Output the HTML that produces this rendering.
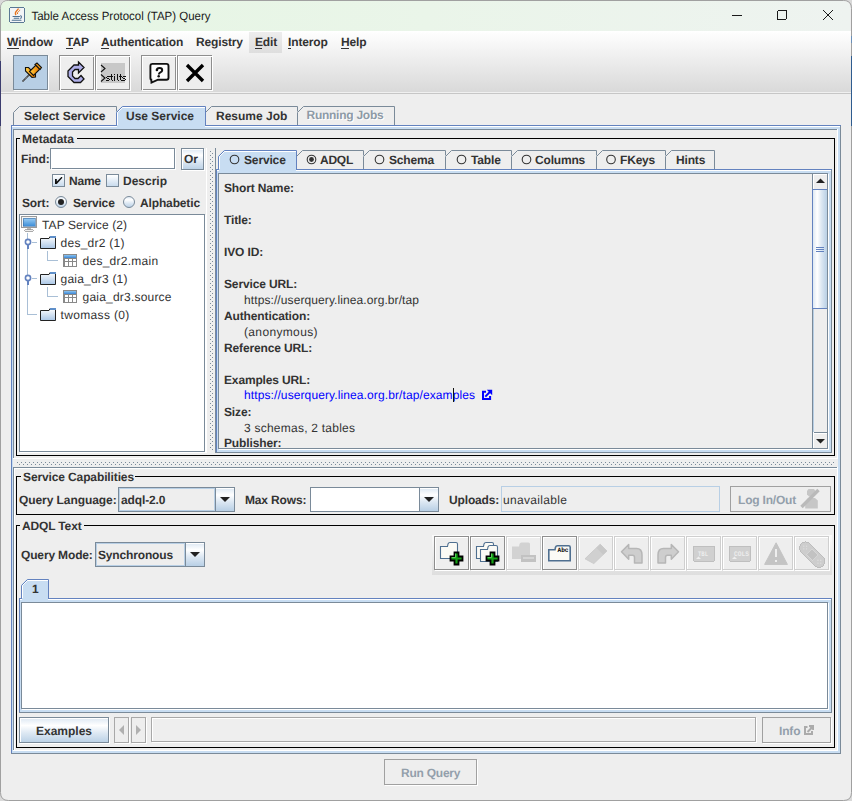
<!DOCTYPE html>
<html><head><meta charset="utf-8"><title>Table Access Protocol (TAP) Query</title>
<style>html,body{margin:0;padding:0;width:852px;height:801px;overflow:hidden;background:#d9d9d9;font-family:"Liberation Sans",sans-serif;}svg{display:block} svg text{shape-rendering:auto} circle,path{shape-rendering:geometricPrecision}</style></head>
<body><svg width="852" height="801" viewBox="0 0 852 801" shape-rendering="crispEdges" text-rendering="geometricPrecision"><defs><linearGradient id="g1" x1="0" y1="0" x2="1" y2="0"><stop offset="0" stop-color="#e5f6e3"/><stop offset="0.5" stop-color="#eaf5e9"/><stop offset="1" stop-color="#eef3f0"/></linearGradient><linearGradient id="g2" x1="0" y1="0" x2="0" y2="1"><stop offset="0" stop-color="#FFFFFF"/><stop offset="1" stop-color="#D9D9D9"/></linearGradient><linearGradient id="g3" x1="0" y1="0" x2="0" y2="1"><stop offset="0" stop-color="#EDEDED"/><stop offset="1" stop-color="#DEDEDE"/></linearGradient><linearGradient id="g4" x1="0" y1="0" x2="1" y2="0"><stop offset="0" stop-color="#ffd34a"/><stop offset="0.5" stop-color="#f7a21b"/><stop offset="1" stop-color="#e07000"/></linearGradient><linearGradient id="g5" x1="0" y1="0" x2="0" y2="1"><stop offset="0" stop-color="#DDE8F3"/><stop offset="0.3" stop-color="#FFFFFF"/><stop offset="0.6" stop-color="#DDE8F3"/><stop offset="1" stop-color="#B8CFE5"/></linearGradient><linearGradient id="g6" x1="0" y1="0" x2="0" y2="1"><stop offset="0" stop-color="#FFFFFF"/><stop offset="1" stop-color="#C4D8EC"/></linearGradient><linearGradient id="g7" x1="0" y1="0" x2="0" y2="1"><stop offset="0" stop-color="#FFFFFF"/><stop offset="1" stop-color="#C4D8EC"/></linearGradient><linearGradient id="g8" x1="0" y1="0" x2="0" y2="1"><stop offset="0" stop-color="#DDE8F3"/><stop offset="0.3" stop-color="#FFFFFF"/><stop offset="0.6" stop-color="#DDE8F3"/><stop offset="1" stop-color="#B8CFE5"/></linearGradient><linearGradient id="g9" x1="0" y1="0" x2="0" y2="1"><stop offset="0" stop-color="#DDE8F3"/><stop offset="0.3" stop-color="#FFFFFF"/><stop offset="0.6" stop-color="#DDE8F3"/><stop offset="1" stop-color="#B8CFE5"/></linearGradient><linearGradient id="g10" x1="0" y1="0" x2="0" y2="1"><stop offset="0" stop-color="#9fd0f5"/><stop offset="1" stop-color="#3f8fd8"/></linearGradient><linearGradient id="g11" x1="0" y1="0" x2="0" y2="1"><stop offset="0" stop-color="#ffffff"/><stop offset="1" stop-color="#a9c6e6"/></linearGradient><linearGradient id="g12" x1="0" y1="0" x2="0" y2="1"><stop offset="0" stop-color="#8cc4f0"/><stop offset="1" stop-color="#3a86d6"/></linearGradient><linearGradient id="g13" x1="0" y1="0" x2="0" y2="1"><stop offset="0" stop-color="#ffffff"/><stop offset="1" stop-color="#a9c6e6"/></linearGradient><linearGradient id="g14" x1="0" y1="0" x2="0" y2="1"><stop offset="0" stop-color="#8cc4f0"/><stop offset="1" stop-color="#3a86d6"/></linearGradient><linearGradient id="g15" x1="0" y1="0" x2="0" y2="1"><stop offset="0" stop-color="#ffffff"/><stop offset="1" stop-color="#a9c6e6"/></linearGradient><linearGradient id="g16" x1="0" y1="0" x2="1" y2="0"><stop offset="0" stop-color="#DDE8F3"/><stop offset="0.3" stop-color="#FFFFFF"/><stop offset="0.6" stop-color="#DDE8F3"/><stop offset="1" stop-color="#B8CFE5"/></linearGradient><linearGradient id="g17" x1="0" y1="0" x2="0" y2="1"><stop offset="0" stop-color="#DDE8F3"/><stop offset="0.3" stop-color="#FFFFFF"/><stop offset="0.6" stop-color="#DDE8F3"/><stop offset="1" stop-color="#B8CFE5"/></linearGradient><linearGradient id="g18" x1="0" y1="0" x2="0" y2="1"><stop offset="0" stop-color="#DDE8F3"/><stop offset="0.3" stop-color="#FFFFFF"/><stop offset="0.6" stop-color="#DDE8F3"/><stop offset="1" stop-color="#B8CFE5"/></linearGradient><linearGradient id="g19" x1="0" y1="0" x2="0" y2="1"><stop offset="0" stop-color="#DDE8F3"/><stop offset="0.3" stop-color="#FFFFFF"/><stop offset="0.6" stop-color="#DDE8F3"/><stop offset="1" stop-color="#B8CFE5"/></linearGradient><linearGradient id="g20" x1="0" y1="0" x2="0" y2="1"><stop offset="0" stop-color="#FAFAFA"/><stop offset="1" stop-color="#DEDEDE"/></linearGradient><linearGradient id="g21" x1="0" y1="0" x2="0" y2="1"><stop offset="0" stop-color="#DDE8F3"/><stop offset="0.3" stop-color="#FFFFFF"/><stop offset="0.6" stop-color="#DDE8F3"/><stop offset="1" stop-color="#B8CFE5"/></linearGradient></defs><rect x="0" y="0" width="852" height="801" fill="#d9d9d9"/><path d="M0.5 8.5 Q0.5 0.5 8.5 0.5 H843.5 Q851.5 0.5 851.5 8.5 V792.5 Q851.5 800.5 843.5 800.5 H8.5 Q0.5 800.5 0.5 792.5 Z" fill="#EEEEEE" stroke="#A0A0A0" stroke-width="1"/><rect x="0" y="61" width="1" height="65" fill="#3b3c6e" /><rect x="851" y="56" width="1" height="70" fill="#2f5c8f" /><rect x="851" y="36" width="1" height="7" fill="#6a8fb8" /><path d="M1 8 Q1 1 8 1 L843 1 Q850 1 850 8 L850 31 L1 31 Z" fill="url(#g1)"/><rect x="9.5" y="7.5" width="15" height="15" rx="2" fill="#f3f4f6" stroke="#5a7894" stroke-width="1.2"/><path d="M16 15 Q14.5 13 16.5 11 Q18 9.5 18.5 8.5" stroke="#e8721a" stroke-width="1.3" fill="none"/><path d="M17.5 14 Q17 12.5 18.8 11.3 Q19.8 10.5 19.8 9.8" stroke="#e8721a" stroke-width="1" fill="none"/><path d="M13 16.5 H19.5 M14.2 18.3 H18.8 M12.2 20.2 H21" stroke="#4f7191" stroke-width="1.1" stroke-linecap="round"/><path d="M20.3 15.5 Q22.5 16.5 20.5 18.8" stroke="#4f7191" stroke-width="1.1" fill="none"/><text x="31.5" y="20" font-size="12" fill="#1a1a1a" textLength="179" lengthAdjust="spacingAndGlyphs" font-family="Liberation Sans" >Table Access Protocol (TAP) Query</text><rect x="732" y="15" width="10" height="1" fill="#1a1a1a" /><rect x="777.5" y="10.5" width="9" height="9" rx="1.5" fill="none" stroke="#1a1a1a" stroke-width="1"/><path d="M823 10 L833 20 M833 10 L823 20" stroke="#1a1a1a" stroke-width="1"/><rect x="1" y="31" width="850" height="61" fill="url(#g2)" /><rect x="1" y="92" width="850" height="1" fill="#F0F0F0" /><rect x="1" y="93" width="850" height="1" fill="#C6C6C6" /><rect x="249" y="32" width="33" height="21" fill="url(#g3)" /><text x="7" y="46" font-size="12" font-weight="bold" fill="#333333" textLength="45.86" lengthAdjust="spacing" font-family="Liberation Sans" >Window</text><text x="66" y="46" font-size="12" font-weight="bold" fill="#333333" font-family="Liberation Sans" >TAP</text><text x="101" y="46" font-size="12" font-weight="bold" fill="#333333" textLength="82.3" lengthAdjust="spacing" font-family="Liberation Sans" >Authentication</text><text x="196" y="46" font-size="12" font-weight="bold" fill="#333333" textLength="47.06" lengthAdjust="spacing" font-family="Liberation Sans" >Registry</text><text x="255" y="46" font-size="12" font-weight="bold" fill="#333333" textLength="22.2" lengthAdjust="spacing" font-family="Liberation Sans" >Edit</text><text x="288" y="46" font-size="12" font-weight="bold" fill="#333333" textLength="39.84" lengthAdjust="spacing" font-family="Liberation Sans" >Interop</text><text x="341" y="46" font-size="12" font-weight="bold" fill="#333333" textLength="25.48" lengthAdjust="spacing" font-family="Liberation Sans" >Help</text><rect x="7" y="48" width="12" height="1" fill="#333333" /><rect x="66" y="48" width="7" height="1" fill="#333333" /><rect x="101" y="48" width="8" height="1" fill="#333333" /><rect x="255" y="48" width="7" height="1" fill="#333333" /><rect x="288" y="48" width="3" height="1" fill="#333333" /><rect x="341" y="48" width="8" height="1" fill="#333333" /><rect x="14" y="56" width="34" height="34" fill="#B8CFE5" /><rect x="13" y="55" width="35" height="1" fill="#7A8A99" /><rect x="13" y="89" width="35" height="1" fill="#7A8A99" /><rect x="13" y="55" width="1" height="35" fill="#7A8A99" /><rect x="47" y="55" width="1" height="35" fill="#7A8A99" /><rect x="14" y="90" width="35" height="1" fill="#FFFFFF" /><rect x="48" y="56" width="1" height="35" fill="#FFFFFF" /><rect x="60" y="56" width="34" height="34" fill="#EEEEEE" /><rect x="59" y="55" width="35" height="1" fill="#8E8E8E" /><rect x="59" y="89" width="35" height="1" fill="#8E8E8E" /><rect x="59" y="55" width="1" height="35" fill="#8E8E8E" /><rect x="93" y="55" width="1" height="35" fill="#8E8E8E" /><rect x="60" y="56" width="35" height="1" fill="#FFFFFF" /><rect x="60" y="90" width="35" height="1" fill="#FFFFFF" /><rect x="60" y="56" width="1" height="35" fill="#FFFFFF" /><rect x="94" y="56" width="1" height="35" fill="#FFFFFF" /><rect x="59" y="55" width="1" height="35" fill="#8E8E8E" /><rect x="59" y="55" width="35" height="1" fill="#8E8E8E" /><rect x="96" y="56" width="34" height="34" fill="#EEEEEE" /><rect x="95" y="55" width="35" height="1" fill="#8E8E8E" /><rect x="95" y="89" width="35" height="1" fill="#8E8E8E" /><rect x="95" y="55" width="1" height="35" fill="#8E8E8E" /><rect x="129" y="55" width="1" height="35" fill="#8E8E8E" /><rect x="96" y="56" width="35" height="1" fill="#FFFFFF" /><rect x="96" y="90" width="35" height="1" fill="#FFFFFF" /><rect x="96" y="56" width="1" height="35" fill="#FFFFFF" /><rect x="130" y="56" width="1" height="35" fill="#FFFFFF" /><rect x="95" y="55" width="1" height="35" fill="#8E8E8E" /><rect x="95" y="55" width="35" height="1" fill="#8E8E8E" /><rect x="142" y="56" width="34" height="34" fill="#EEEEEE" /><rect x="141" y="55" width="35" height="1" fill="#8E8E8E" /><rect x="141" y="89" width="35" height="1" fill="#8E8E8E" /><rect x="141" y="55" width="1" height="35" fill="#8E8E8E" /><rect x="175" y="55" width="1" height="35" fill="#8E8E8E" /><rect x="142" y="56" width="35" height="1" fill="#FFFFFF" /><rect x="142" y="90" width="35" height="1" fill="#FFFFFF" /><rect x="142" y="56" width="1" height="35" fill="#FFFFFF" /><rect x="176" y="56" width="1" height="35" fill="#FFFFFF" /><rect x="141" y="55" width="1" height="35" fill="#8E8E8E" /><rect x="141" y="55" width="35" height="1" fill="#8E8E8E" /><rect x="178" y="56" width="34" height="34" fill="#EEEEEE" /><rect x="177" y="55" width="35" height="1" fill="#8E8E8E" /><rect x="177" y="89" width="35" height="1" fill="#8E8E8E" /><rect x="177" y="55" width="1" height="35" fill="#8E8E8E" /><rect x="211" y="55" width="1" height="35" fill="#8E8E8E" /><rect x="178" y="56" width="35" height="1" fill="#FFFFFF" /><rect x="178" y="90" width="35" height="1" fill="#FFFFFF" /><rect x="178" y="56" width="1" height="35" fill="#FFFFFF" /><rect x="212" y="56" width="1" height="35" fill="#FFFFFF" /><rect x="177" y="55" width="1" height="35" fill="#8E8E8E" /><rect x="177" y="55" width="35" height="1" fill="#8E8E8E" /><path d="M22.5 81.5 L29.5 74.5" stroke="#333" stroke-width="1.6"/><path d="M23.5 80.5 L28.5 75.5" stroke="#ddd" stroke-width="0.6" stroke-dasharray="1 1"/><path d="M25.5 67.5 L28.5 67.5 L35.5 74.5 L35.5 77 L32 77.5 L25.5 71 Z" fill="url(#g4)" stroke="#111" stroke-width="1.1"/><path d="M29.5 71.5 L36 65 L40 69 L33.5 75.5 Z" fill="url(#g4)" stroke="#111" stroke-width="1.1"/><path d="M35 64.5 L37 63 L41.5 67.5 L40 69.5 Z" fill="#f59a10" stroke="#111" stroke-width="1.1"/><path d="M78.5 62 L84 67.5 L78.5 73 V69.5 H75 L72.5 72 V76 L75 78.5 H78 L81 75.5 L84 79 L80.5 82.5 H74 L68 76.5 V71 L74 65 H78.5 Z" fill="#aeaee8" stroke="#111" stroke-width="1.3" stroke-linejoin="miter"/><rect x="101" y="63" width="24" height="20" fill="#C8C8C8" /><path d="M101 65 L105 68.5 L101 72 M101 74.5 L105 78 L101 81.5" stroke="#111" stroke-width="1.1" fill="none"/><rect x="107" y="76" width="3" height="1" fill="#111" /><rect x="106" y="77" width="1" height="1" fill="#111" /><rect x="107" y="78" width="2" height="1" fill="#111" /><rect x="109" y="79" width="1" height="1" fill="#111" /><rect x="106" y="80" width="3" height="1" fill="#111" /><rect x="111" y="74" width="1" height="6" fill="#111" /><rect x="110" y="76" width="3" height="1" fill="#111" /><rect x="112" y="80" width="1" height="1" fill="#111" /><rect x="114" y="74" width="1" height="1" fill="#111" /><rect x="114" y="76" width="1" height="5" fill="#111" /><rect x="117" y="74" width="1" height="6" fill="#111" /><rect x="118" y="80" width="1" height="1" fill="#111" /><rect x="120" y="74" width="1" height="6" fill="#111" /><rect x="119" y="76" width="3" height="1" fill="#111" /><rect x="121" y="80" width="1" height="1" fill="#111" /><rect x="123" y="76" width="3" height="1" fill="#111" /><rect x="122" y="77" width="1" height="1" fill="#111" /><rect x="123" y="78" width="2" height="1" fill="#111" /><rect x="125" y="79" width="1" height="1" fill="#111" /><rect x="122" y="80" width="3" height="1" fill="#111" /><path d="M152 63.9 H166.5 Q168.5 63.9 168.5 65.9 V77.7 Q168.5 79.7 166.5 79.7 H158 L151.5 82.5 L151.3 79.7 Q150.4 79.7 150.4 77.7 V65.9 Q150.4 63.9 152.4 63.9 Z" fill="#fff" stroke="#111" stroke-width="1.9"/><path d="M156.9 70.2 Q156.9 68 159.6 68 Q162.2 68 162.2 70.2 Q162.2 71.6 160.4 72.4 Q158.9 73.1 158.9 74.6" stroke="#111" stroke-width="2" fill="none"/><circle cx="156.9" cy="70" r="1.3" fill="#111"/><circle cx="158.7" cy="76.2" r="1.25" fill="#111"/><path d="M187 65 L203 81 M203 65 L187 81" stroke="#000" stroke-width="3.4"/><rect x="12" y="126" width="828" height="627" fill="#C8DDF2" /><rect x="11" y="125" width="1" height="629" fill="#6382BF" /><rect x="11" y="753" width="830" height="1" fill="#7A8A99" /><rect x="840" y="125" width="1" height="629" fill="#7A8A99" /><rect x="11" y="125" width="830" height="1" fill="#6382BF" /><rect x="12" y="126" width="828" height="1" fill="#FFFFFF" /><rect x="13" y="129" width="825" height="622" fill="#EEEEEE" /><rect x="13" y="129" width="824" height="1" fill="#7A8A99" /><rect x="13" y="129" width="1" height="329" fill="#7A8A99" /><rect x="13" y="458" width="825" height="1" fill="#FFFFFF" /><rect x="837" y="129" width="1" height="330" fill="#FFFFFF" /><rect x="13" y="467" width="825" height="1" fill="#7A8A99" /><rect x="13" y="467" width="1" height="283" fill="#7A8A99" /><rect x="13" y="750" width="825" height="1" fill="#FFFFFF" /><rect x="837" y="467" width="1" height="284" fill="#FFFFFF" /><rect x="14" y="468" width="823" height="1" fill="#FFFFFF" /><rect x="14" y="468" width="1" height="282" fill="#FFFFFF" /><rect x="17" y="462" width="1" height="1" fill="#7A8A99" /><rect x="19" y="464" width="1" height="1" fill="#7A8A99" /><rect x="21" y="462" width="1" height="1" fill="#7A8A99" /><rect x="23" y="464" width="1" height="1" fill="#7A8A99" /><rect x="25" y="462" width="1" height="1" fill="#7A8A99" /><rect x="27" y="464" width="1" height="1" fill="#7A8A99" /><rect x="29" y="462" width="1" height="1" fill="#7A8A99" /><rect x="31" y="464" width="1" height="1" fill="#7A8A99" /><rect x="33" y="462" width="1" height="1" fill="#7A8A99" /><rect x="35" y="464" width="1" height="1" fill="#7A8A99" /><rect x="37" y="462" width="1" height="1" fill="#7A8A99" /><rect x="39" y="464" width="1" height="1" fill="#7A8A99" /><rect x="41" y="462" width="1" height="1" fill="#7A8A99" /><rect x="43" y="464" width="1" height="1" fill="#7A8A99" /><rect x="45" y="462" width="1" height="1" fill="#7A8A99" /><rect x="47" y="464" width="1" height="1" fill="#7A8A99" /><rect x="49" y="462" width="1" height="1" fill="#7A8A99" /><rect x="51" y="464" width="1" height="1" fill="#7A8A99" /><rect x="53" y="462" width="1" height="1" fill="#7A8A99" /><rect x="55" y="464" width="1" height="1" fill="#7A8A99" /><rect x="57" y="462" width="1" height="1" fill="#7A8A99" /><rect x="59" y="464" width="1" height="1" fill="#7A8A99" /><rect x="61" y="462" width="1" height="1" fill="#7A8A99" /><rect x="63" y="464" width="1" height="1" fill="#7A8A99" /><rect x="65" y="462" width="1" height="1" fill="#7A8A99" /><rect x="67" y="464" width="1" height="1" fill="#7A8A99" /><rect x="69" y="462" width="1" height="1" fill="#7A8A99" /><rect x="71" y="464" width="1" height="1" fill="#7A8A99" /><rect x="73" y="462" width="1" height="1" fill="#7A8A99" /><rect x="75" y="464" width="1" height="1" fill="#7A8A99" /><rect x="77" y="462" width="1" height="1" fill="#7A8A99" /><rect x="79" y="464" width="1" height="1" fill="#7A8A99" /><rect x="81" y="462" width="1" height="1" fill="#7A8A99" /><rect x="83" y="464" width="1" height="1" fill="#7A8A99" /><rect x="85" y="462" width="1" height="1" fill="#7A8A99" /><rect x="87" y="464" width="1" height="1" fill="#7A8A99" /><rect x="89" y="462" width="1" height="1" fill="#7A8A99" /><rect x="91" y="464" width="1" height="1" fill="#7A8A99" /><rect x="93" y="462" width="1" height="1" fill="#7A8A99" /><rect x="95" y="464" width="1" height="1" fill="#7A8A99" /><rect x="97" y="462" width="1" height="1" fill="#7A8A99" /><rect x="99" y="464" width="1" height="1" fill="#7A8A99" /><rect x="101" y="462" width="1" height="1" fill="#7A8A99" /><rect x="103" y="464" width="1" height="1" fill="#7A8A99" /><rect x="105" y="462" width="1" height="1" fill="#7A8A99" /><rect x="107" y="464" width="1" height="1" fill="#7A8A99" /><rect x="109" y="462" width="1" height="1" fill="#7A8A99" /><rect x="111" y="464" width="1" height="1" fill="#7A8A99" /><rect x="113" y="462" width="1" height="1" fill="#7A8A99" /><rect x="115" y="464" width="1" height="1" fill="#7A8A99" /><rect x="117" y="462" width="1" height="1" fill="#7A8A99" /><rect x="119" y="464" width="1" height="1" fill="#7A8A99" /><rect x="121" y="462" width="1" height="1" fill="#7A8A99" /><rect x="123" y="464" width="1" height="1" fill="#7A8A99" /><rect x="125" y="462" width="1" height="1" fill="#7A8A99" /><rect x="127" y="464" width="1" height="1" fill="#7A8A99" /><rect x="129" y="462" width="1" height="1" fill="#7A8A99" /><rect x="131" y="464" width="1" height="1" fill="#7A8A99" /><rect x="133" y="462" width="1" height="1" fill="#7A8A99" /><rect x="135" y="464" width="1" height="1" fill="#7A8A99" /><rect x="137" y="462" width="1" height="1" fill="#7A8A99" /><rect x="139" y="464" width="1" height="1" fill="#7A8A99" /><rect x="141" y="462" width="1" height="1" fill="#7A8A99" /><rect x="143" y="464" width="1" height="1" fill="#7A8A99" /><rect x="145" y="462" width="1" height="1" fill="#7A8A99" /><rect x="147" y="464" width="1" height="1" fill="#7A8A99" /><rect x="149" y="462" width="1" height="1" fill="#7A8A99" /><rect x="151" y="464" width="1" height="1" fill="#7A8A99" /><rect x="153" y="462" width="1" height="1" fill="#7A8A99" /><rect x="155" y="464" width="1" height="1" fill="#7A8A99" /><rect x="157" y="462" width="1" height="1" fill="#7A8A99" /><rect x="159" y="464" width="1" height="1" fill="#7A8A99" /><rect x="161" y="462" width="1" height="1" fill="#7A8A99" /><rect x="163" y="464" width="1" height="1" fill="#7A8A99" /><rect x="165" y="462" width="1" height="1" fill="#7A8A99" /><rect x="167" y="464" width="1" height="1" fill="#7A8A99" /><rect x="169" y="462" width="1" height="1" fill="#7A8A99" /><rect x="171" y="464" width="1" height="1" fill="#7A8A99" /><rect x="173" y="462" width="1" height="1" fill="#7A8A99" /><rect x="175" y="464" width="1" height="1" fill="#7A8A99" /><rect x="177" y="462" width="1" height="1" fill="#7A8A99" /><rect x="179" y="464" width="1" height="1" fill="#7A8A99" /><rect x="181" y="462" width="1" height="1" fill="#7A8A99" /><rect x="183" y="464" width="1" height="1" fill="#7A8A99" /><rect x="185" y="462" width="1" height="1" fill="#7A8A99" /><rect x="187" y="464" width="1" height="1" fill="#7A8A99" /><rect x="189" y="462" width="1" height="1" fill="#7A8A99" /><rect x="191" y="464" width="1" height="1" fill="#7A8A99" /><rect x="193" y="462" width="1" height="1" fill="#7A8A99" /><rect x="195" y="464" width="1" height="1" fill="#7A8A99" /><rect x="197" y="462" width="1" height="1" fill="#7A8A99" /><rect x="199" y="464" width="1" height="1" fill="#7A8A99" /><rect x="201" y="462" width="1" height="1" fill="#7A8A99" /><rect x="203" y="464" width="1" height="1" fill="#7A8A99" /><rect x="205" y="462" width="1" height="1" fill="#7A8A99" /><rect x="207" y="464" width="1" height="1" fill="#7A8A99" /><rect x="209" y="462" width="1" height="1" fill="#7A8A99" /><rect x="211" y="464" width="1" height="1" fill="#7A8A99" /><rect x="213" y="462" width="1" height="1" fill="#7A8A99" /><rect x="215" y="464" width="1" height="1" fill="#7A8A99" /><rect x="217" y="462" width="1" height="1" fill="#7A8A99" /><rect x="219" y="464" width="1" height="1" fill="#7A8A99" /><rect x="221" y="462" width="1" height="1" fill="#7A8A99" /><rect x="223" y="464" width="1" height="1" fill="#7A8A99" /><rect x="225" y="462" width="1" height="1" fill="#7A8A99" /><rect x="227" y="464" width="1" height="1" fill="#7A8A99" /><rect x="229" y="462" width="1" height="1" fill="#7A8A99" /><rect x="231" y="464" width="1" height="1" fill="#7A8A99" /><rect x="233" y="462" width="1" height="1" fill="#7A8A99" /><rect x="235" y="464" width="1" height="1" fill="#7A8A99" /><rect x="237" y="462" width="1" height="1" fill="#7A8A99" /><rect x="239" y="464" width="1" height="1" fill="#7A8A99" /><rect x="241" y="462" width="1" height="1" fill="#7A8A99" /><rect x="243" y="464" width="1" height="1" fill="#7A8A99" /><rect x="245" y="462" width="1" height="1" fill="#7A8A99" /><rect x="247" y="464" width="1" height="1" fill="#7A8A99" /><rect x="249" y="462" width="1" height="1" fill="#7A8A99" /><rect x="251" y="464" width="1" height="1" fill="#7A8A99" /><rect x="253" y="462" width="1" height="1" fill="#7A8A99" /><rect x="255" y="464" width="1" height="1" fill="#7A8A99" /><rect x="257" y="462" width="1" height="1" fill="#7A8A99" /><rect x="259" y="464" width="1" height="1" fill="#7A8A99" /><rect x="261" y="462" width="1" height="1" fill="#7A8A99" /><rect x="263" y="464" width="1" height="1" fill="#7A8A99" /><rect x="265" y="462" width="1" height="1" fill="#7A8A99" /><rect x="267" y="464" width="1" height="1" fill="#7A8A99" /><rect x="269" y="462" width="1" height="1" fill="#7A8A99" /><rect x="271" y="464" width="1" height="1" fill="#7A8A99" /><rect x="273" y="462" width="1" height="1" fill="#7A8A99" /><rect x="275" y="464" width="1" height="1" fill="#7A8A99" /><rect x="277" y="462" width="1" height="1" fill="#7A8A99" /><rect x="279" y="464" width="1" height="1" fill="#7A8A99" /><rect x="281" y="462" width="1" height="1" fill="#7A8A99" /><rect x="283" y="464" width="1" height="1" fill="#7A8A99" /><rect x="285" y="462" width="1" height="1" fill="#7A8A99" /><rect x="287" y="464" width="1" height="1" fill="#7A8A99" /><rect x="289" y="462" width="1" height="1" fill="#7A8A99" /><rect x="291" y="464" width="1" height="1" fill="#7A8A99" /><rect x="293" y="462" width="1" height="1" fill="#7A8A99" /><rect x="295" y="464" width="1" height="1" fill="#7A8A99" /><rect x="297" y="462" width="1" height="1" fill="#7A8A99" /><rect x="299" y="464" width="1" height="1" fill="#7A8A99" /><rect x="301" y="462" width="1" height="1" fill="#7A8A99" /><rect x="303" y="464" width="1" height="1" fill="#7A8A99" /><rect x="305" y="462" width="1" height="1" fill="#7A8A99" /><rect x="307" y="464" width="1" height="1" fill="#7A8A99" /><rect x="309" y="462" width="1" height="1" fill="#7A8A99" /><rect x="311" y="464" width="1" height="1" fill="#7A8A99" /><rect x="313" y="462" width="1" height="1" fill="#7A8A99" /><rect x="315" y="464" width="1" height="1" fill="#7A8A99" /><rect x="317" y="462" width="1" height="1" fill="#7A8A99" /><rect x="319" y="464" width="1" height="1" fill="#7A8A99" /><rect x="321" y="462" width="1" height="1" fill="#7A8A99" /><rect x="323" y="464" width="1" height="1" fill="#7A8A99" /><rect x="325" y="462" width="1" height="1" fill="#7A8A99" /><rect x="327" y="464" width="1" height="1" fill="#7A8A99" /><rect x="329" y="462" width="1" height="1" fill="#7A8A99" /><rect x="331" y="464" width="1" height="1" fill="#7A8A99" /><rect x="333" y="462" width="1" height="1" fill="#7A8A99" /><rect x="335" y="464" width="1" height="1" fill="#7A8A99" /><rect x="337" y="462" width="1" height="1" fill="#7A8A99" /><rect x="339" y="464" width="1" height="1" fill="#7A8A99" /><rect x="341" y="462" width="1" height="1" fill="#7A8A99" /><rect x="343" y="464" width="1" height="1" fill="#7A8A99" /><rect x="345" y="462" width="1" height="1" fill="#7A8A99" /><rect x="347" y="464" width="1" height="1" fill="#7A8A99" /><rect x="349" y="462" width="1" height="1" fill="#7A8A99" /><rect x="351" y="464" width="1" height="1" fill="#7A8A99" /><rect x="353" y="462" width="1" height="1" fill="#7A8A99" /><rect x="355" y="464" width="1" height="1" fill="#7A8A99" /><rect x="357" y="462" width="1" height="1" fill="#7A8A99" /><rect x="359" y="464" width="1" height="1" fill="#7A8A99" /><rect x="361" y="462" width="1" height="1" fill="#7A8A99" /><rect x="363" y="464" width="1" height="1" fill="#7A8A99" /><rect x="365" y="462" width="1" height="1" fill="#7A8A99" /><rect x="367" y="464" width="1" height="1" fill="#7A8A99" /><rect x="369" y="462" width="1" height="1" fill="#7A8A99" /><rect x="371" y="464" width="1" height="1" fill="#7A8A99" /><rect x="373" y="462" width="1" height="1" fill="#7A8A99" /><rect x="375" y="464" width="1" height="1" fill="#7A8A99" /><rect x="377" y="462" width="1" height="1" fill="#7A8A99" /><rect x="379" y="464" width="1" height="1" fill="#7A8A99" /><rect x="381" y="462" width="1" height="1" fill="#7A8A99" /><rect x="383" y="464" width="1" height="1" fill="#7A8A99" /><rect x="385" y="462" width="1" height="1" fill="#7A8A99" /><rect x="387" y="464" width="1" height="1" fill="#7A8A99" /><rect x="389" y="462" width="1" height="1" fill="#7A8A99" /><rect x="391" y="464" width="1" height="1" fill="#7A8A99" /><rect x="393" y="462" width="1" height="1" fill="#7A8A99" /><rect x="395" y="464" width="1" height="1" fill="#7A8A99" /><rect x="397" y="462" width="1" height="1" fill="#7A8A99" /><rect x="399" y="464" width="1" height="1" fill="#7A8A99" /><rect x="401" y="462" width="1" height="1" fill="#7A8A99" /><rect x="403" y="464" width="1" height="1" fill="#7A8A99" /><rect x="405" y="462" width="1" height="1" fill="#7A8A99" /><rect x="407" y="464" width="1" height="1" fill="#7A8A99" /><rect x="409" y="462" width="1" height="1" fill="#7A8A99" /><rect x="411" y="464" width="1" height="1" fill="#7A8A99" /><rect x="413" y="462" width="1" height="1" fill="#7A8A99" /><rect x="415" y="464" width="1" height="1" fill="#7A8A99" /><rect x="417" y="462" width="1" height="1" fill="#7A8A99" /><rect x="419" y="464" width="1" height="1" fill="#7A8A99" /><rect x="421" y="462" width="1" height="1" fill="#7A8A99" /><rect x="423" y="464" width="1" height="1" fill="#7A8A99" /><rect x="425" y="462" width="1" height="1" fill="#7A8A99" /><rect x="427" y="464" width="1" height="1" fill="#7A8A99" /><rect x="429" y="462" width="1" height="1" fill="#7A8A99" /><rect x="431" y="464" width="1" height="1" fill="#7A8A99" /><rect x="433" y="462" width="1" height="1" fill="#7A8A99" /><rect x="435" y="464" width="1" height="1" fill="#7A8A99" /><rect x="437" y="462" width="1" height="1" fill="#7A8A99" /><rect x="439" y="464" width="1" height="1" fill="#7A8A99" /><rect x="441" y="462" width="1" height="1" fill="#7A8A99" /><rect x="443" y="464" width="1" height="1" fill="#7A8A99" /><rect x="445" y="462" width="1" height="1" fill="#7A8A99" /><rect x="447" y="464" width="1" height="1" fill="#7A8A99" /><rect x="449" y="462" width="1" height="1" fill="#7A8A99" /><rect x="451" y="464" width="1" height="1" fill="#7A8A99" /><rect x="453" y="462" width="1" height="1" fill="#7A8A99" /><rect x="455" y="464" width="1" height="1" fill="#7A8A99" /><rect x="457" y="462" width="1" height="1" fill="#7A8A99" /><rect x="459" y="464" width="1" height="1" fill="#7A8A99" /><rect x="461" y="462" width="1" height="1" fill="#7A8A99" /><rect x="463" y="464" width="1" height="1" fill="#7A8A99" /><rect x="465" y="462" width="1" height="1" fill="#7A8A99" /><rect x="467" y="464" width="1" height="1" fill="#7A8A99" /><rect x="469" y="462" width="1" height="1" fill="#7A8A99" /><rect x="471" y="464" width="1" height="1" fill="#7A8A99" /><rect x="473" y="462" width="1" height="1" fill="#7A8A99" /><rect x="475" y="464" width="1" height="1" fill="#7A8A99" /><rect x="477" y="462" width="1" height="1" fill="#7A8A99" /><rect x="479" y="464" width="1" height="1" fill="#7A8A99" /><rect x="481" y="462" width="1" height="1" fill="#7A8A99" /><rect x="483" y="464" width="1" height="1" fill="#7A8A99" /><rect x="485" y="462" width="1" height="1" fill="#7A8A99" /><rect x="487" y="464" width="1" height="1" fill="#7A8A99" /><rect x="489" y="462" width="1" height="1" fill="#7A8A99" /><rect x="491" y="464" width="1" height="1" fill="#7A8A99" /><rect x="493" y="462" width="1" height="1" fill="#7A8A99" /><rect x="495" y="464" width="1" height="1" fill="#7A8A99" /><rect x="497" y="462" width="1" height="1" fill="#7A8A99" /><rect x="499" y="464" width="1" height="1" fill="#7A8A99" /><rect x="501" y="462" width="1" height="1" fill="#7A8A99" /><rect x="503" y="464" width="1" height="1" fill="#7A8A99" /><rect x="505" y="462" width="1" height="1" fill="#7A8A99" /><rect x="507" y="464" width="1" height="1" fill="#7A8A99" /><rect x="509" y="462" width="1" height="1" fill="#7A8A99" /><rect x="511" y="464" width="1" height="1" fill="#7A8A99" /><rect x="513" y="462" width="1" height="1" fill="#7A8A99" /><rect x="515" y="464" width="1" height="1" fill="#7A8A99" /><rect x="517" y="462" width="1" height="1" fill="#7A8A99" /><rect x="519" y="464" width="1" height="1" fill="#7A8A99" /><rect x="521" y="462" width="1" height="1" fill="#7A8A99" /><rect x="523" y="464" width="1" height="1" fill="#7A8A99" /><rect x="525" y="462" width="1" height="1" fill="#7A8A99" /><rect x="527" y="464" width="1" height="1" fill="#7A8A99" /><rect x="529" y="462" width="1" height="1" fill="#7A8A99" /><rect x="531" y="464" width="1" height="1" fill="#7A8A99" /><rect x="533" y="462" width="1" height="1" fill="#7A8A99" /><rect x="535" y="464" width="1" height="1" fill="#7A8A99" /><rect x="537" y="462" width="1" height="1" fill="#7A8A99" /><rect x="539" y="464" width="1" height="1" fill="#7A8A99" /><rect x="541" y="462" width="1" height="1" fill="#7A8A99" /><rect x="543" y="464" width="1" height="1" fill="#7A8A99" /><rect x="545" y="462" width="1" height="1" fill="#7A8A99" /><rect x="547" y="464" width="1" height="1" fill="#7A8A99" /><rect x="549" y="462" width="1" height="1" fill="#7A8A99" /><rect x="551" y="464" width="1" height="1" fill="#7A8A99" /><rect x="553" y="462" width="1" height="1" fill="#7A8A99" /><rect x="555" y="464" width="1" height="1" fill="#7A8A99" /><rect x="557" y="462" width="1" height="1" fill="#7A8A99" /><rect x="559" y="464" width="1" height="1" fill="#7A8A99" /><rect x="561" y="462" width="1" height="1" fill="#7A8A99" /><rect x="563" y="464" width="1" height="1" fill="#7A8A99" /><rect x="565" y="462" width="1" height="1" fill="#7A8A99" /><rect x="567" y="464" width="1" height="1" fill="#7A8A99" /><rect x="569" y="462" width="1" height="1" fill="#7A8A99" /><rect x="571" y="464" width="1" height="1" fill="#7A8A99" /><rect x="573" y="462" width="1" height="1" fill="#7A8A99" /><rect x="575" y="464" width="1" height="1" fill="#7A8A99" /><rect x="577" y="462" width="1" height="1" fill="#7A8A99" /><rect x="579" y="464" width="1" height="1" fill="#7A8A99" /><rect x="581" y="462" width="1" height="1" fill="#7A8A99" /><rect x="583" y="464" width="1" height="1" fill="#7A8A99" /><rect x="585" y="462" width="1" height="1" fill="#7A8A99" /><rect x="587" y="464" width="1" height="1" fill="#7A8A99" /><rect x="589" y="462" width="1" height="1" fill="#7A8A99" /><rect x="591" y="464" width="1" height="1" fill="#7A8A99" /><rect x="593" y="462" width="1" height="1" fill="#7A8A99" /><rect x="595" y="464" width="1" height="1" fill="#7A8A99" /><rect x="597" y="462" width="1" height="1" fill="#7A8A99" /><rect x="599" y="464" width="1" height="1" fill="#7A8A99" /><rect x="601" y="462" width="1" height="1" fill="#7A8A99" /><rect x="603" y="464" width="1" height="1" fill="#7A8A99" /><rect x="605" y="462" width="1" height="1" fill="#7A8A99" /><rect x="607" y="464" width="1" height="1" fill="#7A8A99" /><rect x="609" y="462" width="1" height="1" fill="#7A8A99" /><rect x="611" y="464" width="1" height="1" fill="#7A8A99" /><rect x="613" y="462" width="1" height="1" fill="#7A8A99" /><rect x="615" y="464" width="1" height="1" fill="#7A8A99" /><rect x="617" y="462" width="1" height="1" fill="#7A8A99" /><rect x="619" y="464" width="1" height="1" fill="#7A8A99" /><rect x="621" y="462" width="1" height="1" fill="#7A8A99" /><rect x="623" y="464" width="1" height="1" fill="#7A8A99" /><rect x="625" y="462" width="1" height="1" fill="#7A8A99" /><rect x="627" y="464" width="1" height="1" fill="#7A8A99" /><rect x="629" y="462" width="1" height="1" fill="#7A8A99" /><rect x="631" y="464" width="1" height="1" fill="#7A8A99" /><rect x="633" y="462" width="1" height="1" fill="#7A8A99" /><rect x="635" y="464" width="1" height="1" fill="#7A8A99" /><rect x="637" y="462" width="1" height="1" fill="#7A8A99" /><rect x="639" y="464" width="1" height="1" fill="#7A8A99" /><rect x="641" y="462" width="1" height="1" fill="#7A8A99" /><rect x="643" y="464" width="1" height="1" fill="#7A8A99" /><rect x="645" y="462" width="1" height="1" fill="#7A8A99" /><rect x="647" y="464" width="1" height="1" fill="#7A8A99" /><rect x="649" y="462" width="1" height="1" fill="#7A8A99" /><rect x="651" y="464" width="1" height="1" fill="#7A8A99" /><rect x="653" y="462" width="1" height="1" fill="#7A8A99" /><rect x="655" y="464" width="1" height="1" fill="#7A8A99" /><rect x="657" y="462" width="1" height="1" fill="#7A8A99" /><rect x="659" y="464" width="1" height="1" fill="#7A8A99" /><rect x="661" y="462" width="1" height="1" fill="#7A8A99" /><rect x="663" y="464" width="1" height="1" fill="#7A8A99" /><rect x="665" y="462" width="1" height="1" fill="#7A8A99" /><rect x="667" y="464" width="1" height="1" fill="#7A8A99" /><rect x="669" y="462" width="1" height="1" fill="#7A8A99" /><rect x="671" y="464" width="1" height="1" fill="#7A8A99" /><rect x="673" y="462" width="1" height="1" fill="#7A8A99" /><rect x="675" y="464" width="1" height="1" fill="#7A8A99" /><rect x="677" y="462" width="1" height="1" fill="#7A8A99" /><rect x="679" y="464" width="1" height="1" fill="#7A8A99" /><rect x="681" y="462" width="1" height="1" fill="#7A8A99" /><rect x="683" y="464" width="1" height="1" fill="#7A8A99" /><rect x="685" y="462" width="1" height="1" fill="#7A8A99" /><rect x="687" y="464" width="1" height="1" fill="#7A8A99" /><rect x="689" y="462" width="1" height="1" fill="#7A8A99" /><rect x="691" y="464" width="1" height="1" fill="#7A8A99" /><rect x="693" y="462" width="1" height="1" fill="#7A8A99" /><rect x="695" y="464" width="1" height="1" fill="#7A8A99" /><rect x="697" y="462" width="1" height="1" fill="#7A8A99" /><rect x="699" y="464" width="1" height="1" fill="#7A8A99" /><rect x="701" y="462" width="1" height="1" fill="#7A8A99" /><rect x="703" y="464" width="1" height="1" fill="#7A8A99" /><rect x="705" y="462" width="1" height="1" fill="#7A8A99" /><rect x="707" y="464" width="1" height="1" fill="#7A8A99" /><rect x="709" y="462" width="1" height="1" fill="#7A8A99" /><rect x="711" y="464" width="1" height="1" fill="#7A8A99" /><rect x="713" y="462" width="1" height="1" fill="#7A8A99" /><rect x="715" y="464" width="1" height="1" fill="#7A8A99" /><rect x="717" y="462" width="1" height="1" fill="#7A8A99" /><rect x="719" y="464" width="1" height="1" fill="#7A8A99" /><rect x="721" y="462" width="1" height="1" fill="#7A8A99" /><rect x="723" y="464" width="1" height="1" fill="#7A8A99" /><rect x="725" y="462" width="1" height="1" fill="#7A8A99" /><rect x="727" y="464" width="1" height="1" fill="#7A8A99" /><rect x="729" y="462" width="1" height="1" fill="#7A8A99" /><rect x="731" y="464" width="1" height="1" fill="#7A8A99" /><rect x="733" y="462" width="1" height="1" fill="#7A8A99" /><rect x="735" y="464" width="1" height="1" fill="#7A8A99" /><rect x="737" y="462" width="1" height="1" fill="#7A8A99" /><rect x="739" y="464" width="1" height="1" fill="#7A8A99" /><rect x="741" y="462" width="1" height="1" fill="#7A8A99" /><rect x="743" y="464" width="1" height="1" fill="#7A8A99" /><rect x="745" y="462" width="1" height="1" fill="#7A8A99" /><rect x="747" y="464" width="1" height="1" fill="#7A8A99" /><rect x="749" y="462" width="1" height="1" fill="#7A8A99" /><rect x="751" y="464" width="1" height="1" fill="#7A8A99" /><rect x="753" y="462" width="1" height="1" fill="#7A8A99" /><rect x="755" y="464" width="1" height="1" fill="#7A8A99" /><rect x="757" y="462" width="1" height="1" fill="#7A8A99" /><rect x="759" y="464" width="1" height="1" fill="#7A8A99" /><rect x="761" y="462" width="1" height="1" fill="#7A8A99" /><rect x="763" y="464" width="1" height="1" fill="#7A8A99" /><rect x="765" y="462" width="1" height="1" fill="#7A8A99" /><rect x="767" y="464" width="1" height="1" fill="#7A8A99" /><rect x="769" y="462" width="1" height="1" fill="#7A8A99" /><rect x="771" y="464" width="1" height="1" fill="#7A8A99" /><rect x="773" y="462" width="1" height="1" fill="#7A8A99" /><rect x="775" y="464" width="1" height="1" fill="#7A8A99" /><rect x="777" y="462" width="1" height="1" fill="#7A8A99" /><rect x="779" y="464" width="1" height="1" fill="#7A8A99" /><rect x="781" y="462" width="1" height="1" fill="#7A8A99" /><rect x="783" y="464" width="1" height="1" fill="#7A8A99" /><rect x="785" y="462" width="1" height="1" fill="#7A8A99" /><rect x="787" y="464" width="1" height="1" fill="#7A8A99" /><rect x="789" y="462" width="1" height="1" fill="#7A8A99" /><rect x="791" y="464" width="1" height="1" fill="#7A8A99" /><rect x="793" y="462" width="1" height="1" fill="#7A8A99" /><rect x="795" y="464" width="1" height="1" fill="#7A8A99" /><rect x="797" y="462" width="1" height="1" fill="#7A8A99" /><rect x="799" y="464" width="1" height="1" fill="#7A8A99" /><rect x="801" y="462" width="1" height="1" fill="#7A8A99" /><rect x="803" y="464" width="1" height="1" fill="#7A8A99" /><rect x="805" y="462" width="1" height="1" fill="#7A8A99" /><rect x="807" y="464" width="1" height="1" fill="#7A8A99" /><rect x="809" y="462" width="1" height="1" fill="#7A8A99" /><rect x="811" y="464" width="1" height="1" fill="#7A8A99" /><rect x="813" y="462" width="1" height="1" fill="#7A8A99" /><rect x="815" y="464" width="1" height="1" fill="#7A8A99" /><rect x="817" y="462" width="1" height="1" fill="#7A8A99" /><rect x="819" y="464" width="1" height="1" fill="#7A8A99" /><rect x="821" y="462" width="1" height="1" fill="#7A8A99" /><rect x="823" y="464" width="1" height="1" fill="#7A8A99" /><rect x="825" y="462" width="1" height="1" fill="#7A8A99" /><rect x="827" y="464" width="1" height="1" fill="#7A8A99" /><rect x="829" y="462" width="1" height="1" fill="#7A8A99" /><rect x="831" y="464" width="1" height="1" fill="#7A8A99" /><rect x="833" y="462" width="1" height="1" fill="#7A8A99" /><path d="M13 125 V112 L19 106 H116 V125 Z" fill="#EEEEEE"/><path d="M13.5 125 V112.5 L19.5 106.5 H116.5 V125" fill="none" stroke="#7A8A99" stroke-width="1"/><text x="24" y="120" font-size="12" font-weight="bold" fill="#333333" textLength="81.36" lengthAdjust="spacing" font-family="Liberation Sans" >Select Service</text><path d="M205 125 V112 L211 106 H297 V125 Z" fill="#EEEEEE"/><path d="M205.5 125 V112.5 L211.5 106.5 H297.5 V125" fill="none" stroke="#7A8A99" stroke-width="1"/><text x="216" y="120" font-size="12" font-weight="bold" fill="#333333" textLength="71.34" lengthAdjust="spacing" font-family="Liberation Sans" >Resume Job</text><path d="M297 125 V112 L303 106 H394 V125 Z" fill="#EEEEEE"/><path d="M297.5 125 V112.5 L303.5 106.5 H394.5 V125" fill="none" stroke="#7A8A99" stroke-width="1"/><text x="307.5" y="120" font-size="12" font-weight="bold" fill="#FFFFFF" textLength="77.17" lengthAdjust="spacing" font-family="Liberation Sans" >Running Jobs</text><text x="306.5" y="119" font-size="12" font-weight="bold" fill="#8D9AA6" textLength="77.17" lengthAdjust="spacing" font-family="Liberation Sans" >Running Jobs</text><path d="M116 125 V112 L122 106 H205 V125 Z" fill="#C8DDF2"/><path d="M116.5 125 V112.5 L122.5 106.5 H205.5 V125" fill="none" stroke="#6382BF" stroke-width="1"/><path d="M117.5 125 V112.5 L122.5 107.5 H205" fill="none" stroke="#fff" stroke-width="1"/><text x="126" y="120" font-size="12" font-weight="bold" fill="#333333" textLength="68.03" lengthAdjust="spacing" font-family="Liberation Sans" >Use Service</text><rect x="117" y="125" width="88" height="4" fill="#C8DDF2" /><rect x="117" y="126" width="88" height="1" fill="#C8DDF2" /><rect x="16" y="138" width="4" height="1" fill="#000" /><rect x="77" y="138" width="758" height="1" fill="#000" /><rect x="16" y="138" width="1" height="318" fill="#000" /><rect x="834" y="138" width="1" height="318" fill="#000" /><rect x="16" y="455" width="819" height="1" fill="#000" /><text x="22" y="143" font-size="12" font-weight="bold" fill="#333333" textLength="52.02" lengthAdjust="spacing" font-family="Liberation Sans" >Metadata</text><text x="21" y="163" font-size="12" font-weight="bold" fill="#333333" textLength="28.73" lengthAdjust="spacing" font-family="Liberation Sans" >Find:</text><rect x="51" y="149" width="124" height="20" fill="#FFFFFF" /><rect x="51" y="149" width="125" height="1" fill="#FFFFFF" /><rect x="51" y="169" width="125" height="1" fill="#FFFFFF" /><rect x="51" y="149" width="1" height="21" fill="#FFFFFF" /><rect x="175" y="149" width="1" height="21" fill="#FFFFFF" /><rect x="50" y="148" width="125" height="1" fill="#7A8A99" /><rect x="50" y="168" width="125" height="1" fill="#7A8A99" /><rect x="50" y="148" width="1" height="21" fill="#7A8A99" /><rect x="174" y="148" width="1" height="21" fill="#7A8A99" /><rect x="51" y="168" width="1" height="1" fill="#EEEEEE" /><rect x="182" y="149" width="22" height="21" fill="url(#g5)" /><rect x="181" y="148" width="23" height="1" fill="#7A8A99" /><rect x="181" y="169" width="23" height="1" fill="#7A8A99" /><rect x="181" y="148" width="1" height="22" fill="#7A8A99" /><rect x="203" y="148" width="1" height="22" fill="#7A8A99" /><rect x="182" y="170" width="23" height="1" fill="#FFFFFF" /><rect x="204" y="149" width="1" height="22" fill="#FFFFFF" /><rect x="182" y="149" width="21" height="1" fill="#FFFFFF" /><rect x="182" y="149" width="1" height="20" fill="#FFFFFF" /><text x="184" y="163" font-size="12" font-weight="bold" fill="#333333" font-family="Liberation Sans" >Or</text><rect x="53" y="175" width="12" height="12" fill="url(#g6)" /><rect x="52" y="174" width="13" height="1" fill="#7A8A99" /><rect x="52" y="186" width="13" height="1" fill="#7A8A99" /><rect x="52" y="174" width="1" height="13" fill="#7A8A99" /><rect x="64" y="174" width="1" height="13" fill="#7A8A99" /><path d="M55 179 H56.8 V181.6 L61.3 177 H62.2 V178 L56.8 183.9 H55 Z" fill="#111"/><text x="69" y="185" font-size="12" font-weight="bold" fill="#333333" textLength="32.03" lengthAdjust="spacing" font-family="Liberation Sans" >Name</text><rect x="107" y="175" width="12" height="12" fill="url(#g7)" /><rect x="106" y="174" width="13" height="1" fill="#7A8A99" /><rect x="106" y="186" width="13" height="1" fill="#7A8A99" /><rect x="106" y="174" width="1" height="13" fill="#7A8A99" /><rect x="118" y="174" width="1" height="13" fill="#7A8A99" /><text x="123" y="185" font-size="12" font-weight="bold" fill="#333333" textLength="44.02" lengthAdjust="spacing" font-family="Liberation Sans" >Descrip</text><text x="22" y="207" font-size="12" font-weight="bold" fill="#333333" textLength="27.44" lengthAdjust="spacing" font-family="Liberation Sans" >Sort:</text><circle cx="61" cy="202" r="5.5" fill="url(#g8)" stroke="#7A8A99" stroke-width="1"/><circle cx="61" cy="202" r="3" fill="#222"/><text x="73" y="207" font-size="12" font-weight="bold" fill="#333333" textLength="41.83" lengthAdjust="spacing" font-family="Liberation Sans" >Service</text><circle cx="129" cy="202" r="5.5" fill="url(#g9)" stroke="#7A8A99" stroke-width="1"/><text x="140" y="207" font-size="12" font-weight="bold" fill="#333333" textLength="60.1" lengthAdjust="spacing" font-family="Liberation Sans" >Alphabetic</text><rect x="20" y="215" width="184" height="236" fill="#FFFFFF" /><rect x="19" y="214" width="186" height="1" fill="#7A8A99" /><rect x="19" y="451" width="186" height="1" fill="#7A8A99" /><rect x="19" y="214" width="1" height="238" fill="#7A8A99" /><rect x="204" y="214" width="1" height="238" fill="#7A8A99" /><rect x="205" y="215" width="1" height="238" fill="#FFFFFF" /><rect x="20" y="452" width="186" height="1" fill="#FFFFFF" /><rect x="210" y="151" width="1" height="1" fill="#7A8A99" /><rect x="212" y="153" width="1" height="1" fill="#7A8A99" /><rect x="210" y="155" width="1" height="1" fill="#7A8A99" /><rect x="212" y="157" width="1" height="1" fill="#7A8A99" /><rect x="210" y="159" width="1" height="1" fill="#7A8A99" /><rect x="212" y="161" width="1" height="1" fill="#7A8A99" /><rect x="210" y="163" width="1" height="1" fill="#7A8A99" /><rect x="212" y="165" width="1" height="1" fill="#7A8A99" /><rect x="210" y="167" width="1" height="1" fill="#7A8A99" /><rect x="212" y="169" width="1" height="1" fill="#7A8A99" /><rect x="210" y="171" width="1" height="1" fill="#7A8A99" /><rect x="212" y="173" width="1" height="1" fill="#7A8A99" /><rect x="210" y="175" width="1" height="1" fill="#7A8A99" /><rect x="212" y="177" width="1" height="1" fill="#7A8A99" /><rect x="210" y="179" width="1" height="1" fill="#7A8A99" /><rect x="212" y="181" width="1" height="1" fill="#7A8A99" /><rect x="210" y="183" width="1" height="1" fill="#7A8A99" /><rect x="212" y="185" width="1" height="1" fill="#7A8A99" /><rect x="210" y="187" width="1" height="1" fill="#7A8A99" /><rect x="212" y="189" width="1" height="1" fill="#7A8A99" /><rect x="210" y="191" width="1" height="1" fill="#7A8A99" /><rect x="212" y="193" width="1" height="1" fill="#7A8A99" /><rect x="210" y="195" width="1" height="1" fill="#7A8A99" /><rect x="212" y="197" width="1" height="1" fill="#7A8A99" /><rect x="210" y="199" width="1" height="1" fill="#7A8A99" /><rect x="212" y="201" width="1" height="1" fill="#7A8A99" /><rect x="210" y="203" width="1" height="1" fill="#7A8A99" /><rect x="212" y="205" width="1" height="1" fill="#7A8A99" /><rect x="210" y="207" width="1" height="1" fill="#7A8A99" /><rect x="212" y="209" width="1" height="1" fill="#7A8A99" /><rect x="210" y="211" width="1" height="1" fill="#7A8A99" /><rect x="212" y="213" width="1" height="1" fill="#7A8A99" /><rect x="210" y="215" width="1" height="1" fill="#7A8A99" /><rect x="212" y="217" width="1" height="1" fill="#7A8A99" /><rect x="210" y="219" width="1" height="1" fill="#7A8A99" /><rect x="212" y="221" width="1" height="1" fill="#7A8A99" /><rect x="210" y="223" width="1" height="1" fill="#7A8A99" /><rect x="212" y="225" width="1" height="1" fill="#7A8A99" /><rect x="210" y="227" width="1" height="1" fill="#7A8A99" /><rect x="212" y="229" width="1" height="1" fill="#7A8A99" /><rect x="210" y="231" width="1" height="1" fill="#7A8A99" /><rect x="212" y="233" width="1" height="1" fill="#7A8A99" /><rect x="210" y="235" width="1" height="1" fill="#7A8A99" /><rect x="212" y="237" width="1" height="1" fill="#7A8A99" /><rect x="210" y="239" width="1" height="1" fill="#7A8A99" /><rect x="212" y="241" width="1" height="1" fill="#7A8A99" /><rect x="210" y="243" width="1" height="1" fill="#7A8A99" /><rect x="212" y="245" width="1" height="1" fill="#7A8A99" /><rect x="210" y="247" width="1" height="1" fill="#7A8A99" /><rect x="212" y="249" width="1" height="1" fill="#7A8A99" /><rect x="210" y="251" width="1" height="1" fill="#7A8A99" /><rect x="212" y="253" width="1" height="1" fill="#7A8A99" /><rect x="210" y="255" width="1" height="1" fill="#7A8A99" /><rect x="212" y="257" width="1" height="1" fill="#7A8A99" /><rect x="210" y="259" width="1" height="1" fill="#7A8A99" /><rect x="212" y="261" width="1" height="1" fill="#7A8A99" /><rect x="210" y="263" width="1" height="1" fill="#7A8A99" /><rect x="212" y="265" width="1" height="1" fill="#7A8A99" /><rect x="210" y="267" width="1" height="1" fill="#7A8A99" /><rect x="212" y="269" width="1" height="1" fill="#7A8A99" /><rect x="210" y="271" width="1" height="1" fill="#7A8A99" /><rect x="212" y="273" width="1" height="1" fill="#7A8A99" /><rect x="210" y="275" width="1" height="1" fill="#7A8A99" /><rect x="212" y="277" width="1" height="1" fill="#7A8A99" /><rect x="210" y="279" width="1" height="1" fill="#7A8A99" /><rect x="212" y="281" width="1" height="1" fill="#7A8A99" /><rect x="210" y="283" width="1" height="1" fill="#7A8A99" /><rect x="212" y="285" width="1" height="1" fill="#7A8A99" /><rect x="210" y="287" width="1" height="1" fill="#7A8A99" /><rect x="212" y="289" width="1" height="1" fill="#7A8A99" /><rect x="210" y="291" width="1" height="1" fill="#7A8A99" /><rect x="212" y="293" width="1" height="1" fill="#7A8A99" /><rect x="210" y="295" width="1" height="1" fill="#7A8A99" /><rect x="212" y="297" width="1" height="1" fill="#7A8A99" /><rect x="210" y="299" width="1" height="1" fill="#7A8A99" /><rect x="212" y="301" width="1" height="1" fill="#7A8A99" /><rect x="210" y="303" width="1" height="1" fill="#7A8A99" /><rect x="212" y="305" width="1" height="1" fill="#7A8A99" /><rect x="210" y="307" width="1" height="1" fill="#7A8A99" /><rect x="212" y="309" width="1" height="1" fill="#7A8A99" /><rect x="210" y="311" width="1" height="1" fill="#7A8A99" /><rect x="212" y="313" width="1" height="1" fill="#7A8A99" /><rect x="210" y="315" width="1" height="1" fill="#7A8A99" /><rect x="212" y="317" width="1" height="1" fill="#7A8A99" /><rect x="210" y="319" width="1" height="1" fill="#7A8A99" /><rect x="212" y="321" width="1" height="1" fill="#7A8A99" /><rect x="210" y="323" width="1" height="1" fill="#7A8A99" /><rect x="212" y="325" width="1" height="1" fill="#7A8A99" /><rect x="210" y="327" width="1" height="1" fill="#7A8A99" /><rect x="212" y="329" width="1" height="1" fill="#7A8A99" /><rect x="210" y="331" width="1" height="1" fill="#7A8A99" /><rect x="212" y="333" width="1" height="1" fill="#7A8A99" /><rect x="210" y="335" width="1" height="1" fill="#7A8A99" /><rect x="212" y="337" width="1" height="1" fill="#7A8A99" /><rect x="210" y="339" width="1" height="1" fill="#7A8A99" /><rect x="212" y="341" width="1" height="1" fill="#7A8A99" /><rect x="210" y="343" width="1" height="1" fill="#7A8A99" /><rect x="212" y="345" width="1" height="1" fill="#7A8A99" /><rect x="210" y="347" width="1" height="1" fill="#7A8A99" /><rect x="212" y="349" width="1" height="1" fill="#7A8A99" /><rect x="210" y="351" width="1" height="1" fill="#7A8A99" /><rect x="212" y="353" width="1" height="1" fill="#7A8A99" /><rect x="210" y="355" width="1" height="1" fill="#7A8A99" /><rect x="212" y="357" width="1" height="1" fill="#7A8A99" /><rect x="210" y="359" width="1" height="1" fill="#7A8A99" /><rect x="212" y="361" width="1" height="1" fill="#7A8A99" /><rect x="210" y="363" width="1" height="1" fill="#7A8A99" /><rect x="212" y="365" width="1" height="1" fill="#7A8A99" /><rect x="210" y="367" width="1" height="1" fill="#7A8A99" /><rect x="212" y="369" width="1" height="1" fill="#7A8A99" /><rect x="210" y="371" width="1" height="1" fill="#7A8A99" /><rect x="212" y="373" width="1" height="1" fill="#7A8A99" /><rect x="210" y="375" width="1" height="1" fill="#7A8A99" /><rect x="212" y="377" width="1" height="1" fill="#7A8A99" /><rect x="210" y="379" width="1" height="1" fill="#7A8A99" /><rect x="212" y="381" width="1" height="1" fill="#7A8A99" /><rect x="210" y="383" width="1" height="1" fill="#7A8A99" /><rect x="212" y="385" width="1" height="1" fill="#7A8A99" /><rect x="210" y="387" width="1" height="1" fill="#7A8A99" /><rect x="212" y="389" width="1" height="1" fill="#7A8A99" /><rect x="210" y="391" width="1" height="1" fill="#7A8A99" /><rect x="212" y="393" width="1" height="1" fill="#7A8A99" /><rect x="210" y="395" width="1" height="1" fill="#7A8A99" /><rect x="212" y="397" width="1" height="1" fill="#7A8A99" /><rect x="210" y="399" width="1" height="1" fill="#7A8A99" /><rect x="212" y="401" width="1" height="1" fill="#7A8A99" /><rect x="210" y="403" width="1" height="1" fill="#7A8A99" /><rect x="212" y="405" width="1" height="1" fill="#7A8A99" /><rect x="210" y="407" width="1" height="1" fill="#7A8A99" /><rect x="212" y="409" width="1" height="1" fill="#7A8A99" /><rect x="210" y="411" width="1" height="1" fill="#7A8A99" /><rect x="212" y="413" width="1" height="1" fill="#7A8A99" /><rect x="210" y="415" width="1" height="1" fill="#7A8A99" /><rect x="212" y="417" width="1" height="1" fill="#7A8A99" /><rect x="210" y="419" width="1" height="1" fill="#7A8A99" /><rect x="212" y="421" width="1" height="1" fill="#7A8A99" /><rect x="210" y="423" width="1" height="1" fill="#7A8A99" /><rect x="212" y="425" width="1" height="1" fill="#7A8A99" /><rect x="210" y="427" width="1" height="1" fill="#7A8A99" /><rect x="212" y="429" width="1" height="1" fill="#7A8A99" /><rect x="210" y="431" width="1" height="1" fill="#7A8A99" /><rect x="212" y="433" width="1" height="1" fill="#7A8A99" /><rect x="210" y="435" width="1" height="1" fill="#7A8A99" /><rect x="212" y="437" width="1" height="1" fill="#7A8A99" /><rect x="210" y="439" width="1" height="1" fill="#7A8A99" /><rect x="212" y="441" width="1" height="1" fill="#7A8A99" /><rect x="210" y="443" width="1" height="1" fill="#7A8A99" /><rect x="212" y="445" width="1" height="1" fill="#7A8A99" /><rect x="210" y="447" width="1" height="1" fill="#7A8A99" /><rect x="212" y="449" width="1" height="1" fill="#7A8A99" /><rect x="215" y="148" width="1" height="305" fill="#7A8A99" /><rect x="206" y="148" width="1" height="305" fill="#FFFFFF" /><g transform="translate(21,216)"><rect x="0.5" y="0.5" width="15" height="11" rx="1" fill="#f4f4f4" stroke="#9a9a9a"/><rect x="2" y="2" width="12" height="8" fill="url(#g10)" stroke="#3a6ea5" stroke-width="0.6"/><rect x="6" y="12" width="4" height="2" fill="#bbb"/><rect x="3.5" y="13.5" width="9" height="2" rx="1" fill="#eee" stroke="#999" stroke-width="0.8"/></g><text x="42" y="229" font-size="12" fill="#333333" textLength="85.0" lengthAdjust="spacing" font-family="Liberation Sans" >TAP Service (2)</text><rect x="27" y="233" width="1" height="82" fill="#A9BFD6" /><rect x="32" y="242" width="5" height="1" fill="#A9BFD6" /><rect x="32" y="278" width="5" height="1" fill="#A9BFD6" /><rect x="28" y="314" width="9" height="1" fill="#A9BFD6" /><circle cx="28" cy="242" r="2.6" fill="#fff" stroke="#6382BF" stroke-width="1.6"/><rect x="27" y="245" width="2" height="4" fill="#6382BF" /><circle cx="28" cy="278" r="2.6" fill="#fff" stroke="#6382BF" stroke-width="1.6"/><rect x="27" y="281" width="2" height="4" fill="#6382BF" /><g transform="translate(40,236)"><path d="M0.5 2.5 H9 L10 0.5 H15.5 V12.5 H0.5 Z" fill="url(#g11)" stroke="#222" stroke-width="1"/><rect x="10" y="0" width="6" height="2" fill="#5f8fc9"/></g><text x="60.5" y="247" font-size="12" fill="#333333" textLength="64.0" lengthAdjust="spacing" font-family="Liberation Sans" >des_dr2 (1)</text><rect x="47" y="251" width="1" height="10" fill="#A9BFD6" /><rect x="47" y="260" width="11" height="1" fill="#A9BFD6" /><g transform="translate(63,254)"><rect x="0.5" y="0.5" width="13" height="12" rx="1" fill="#888" stroke="#8a8a8a"/><rect x="1" y="1" width="12" height="3" fill="url(#g12)"/><rect x="1.5" y="5.0" width="3" height="1.9" fill="#fff"/><rect x="5.5" y="5.0" width="3" height="1.9" fill="#fff"/><rect x="9.5" y="5.0" width="3" height="1.9" fill="#fff"/><rect x="1.5" y="7.7" width="3" height="1.9" fill="#fff"/><rect x="5.5" y="7.7" width="3" height="1.9" fill="#fff"/><rect x="9.5" y="7.7" width="3" height="1.9" fill="#fff"/><rect x="1.5" y="10.4" width="3" height="1.9" fill="#fff"/><rect x="5.5" y="10.4" width="3" height="1.9" fill="#fff"/><rect x="9.5" y="10.4" width="3" height="1.9" fill="#fff"/></g><text x="82.5" y="265" font-size="12" fill="#333333" textLength="75.6" lengthAdjust="spacing" font-family="Liberation Sans" >des_dr2.main</text><g transform="translate(40,272)"><path d="M0.5 2.5 H9 L10 0.5 H15.5 V12.5 H0.5 Z" fill="url(#g13)" stroke="#222" stroke-width="1"/><rect x="10" y="0" width="6" height="2" fill="#5f8fc9"/></g><text x="60.5" y="283" font-size="12" fill="#333333" textLength="67.0" lengthAdjust="spacing" font-family="Liberation Sans" >gaia_dr3 (1)</text><rect x="47" y="287" width="1" height="10" fill="#A9BFD6" /><rect x="47" y="296" width="11" height="1" fill="#A9BFD6" /><g transform="translate(63,290)"><rect x="0.5" y="0.5" width="13" height="12" rx="1" fill="#888" stroke="#8a8a8a"/><rect x="1" y="1" width="12" height="3" fill="url(#g14)"/><rect x="1.5" y="5.0" width="3" height="1.9" fill="#fff"/><rect x="5.5" y="5.0" width="3" height="1.9" fill="#fff"/><rect x="9.5" y="5.0" width="3" height="1.9" fill="#fff"/><rect x="1.5" y="7.7" width="3" height="1.9" fill="#fff"/><rect x="5.5" y="7.7" width="3" height="1.9" fill="#fff"/><rect x="9.5" y="7.7" width="3" height="1.9" fill="#fff"/><rect x="1.5" y="10.4" width="3" height="1.9" fill="#fff"/><rect x="5.5" y="10.4" width="3" height="1.9" fill="#fff"/><rect x="9.5" y="10.4" width="3" height="1.9" fill="#fff"/></g><text x="82.5" y="301" font-size="12" fill="#333333" textLength="89.0" lengthAdjust="spacing" font-family="Liberation Sans" >gaia_dr3.source</text><g transform="translate(40,308)"><path d="M0.5 2.5 H9 L10 0.5 H15.5 V12.5 H0.5 Z" fill="url(#g15)" stroke="#222" stroke-width="1"/><rect x="10" y="0" width="6" height="2" fill="#5f8fc9"/></g><text x="60.5" y="319" font-size="12" fill="#333333" textLength="68.8" lengthAdjust="spacing" font-family="Liberation Sans" >twomass (0)</text><rect x="217" y="170" width="614" height="282" fill="#C8DDF2" /><rect x="216" y="169" width="1" height="284" fill="#6382BF" /><rect x="831" y="169" width="1" height="284" fill="#7A8A99" /><rect x="216" y="452" width="616" height="1" fill="#7A8A99" /><rect x="216" y="169" width="616" height="1" fill="#6382BF" /><rect x="217" y="170" width="614" height="1" fill="#FFFFFF" /><rect x="219" y="174" width="608" height="274" fill="#EEEEEE" /><rect x="218" y="173" width="610" height="1" fill="#7A8A99" /><rect x="218" y="448" width="610" height="1" fill="#7A8A99" /><rect x="218" y="173" width="1" height="276" fill="#7A8A99" /><rect x="827" y="173" width="1" height="276" fill="#7A8A99" /><rect x="828" y="174" width="1" height="276" fill="#FFFFFF" /><rect x="219" y="449" width="610" height="1" fill="#FFFFFF" /><path d="M296 169 V156 L302 150 H363 V169 Z" fill="#EEEEEE"/><path d="M296.5 169 V156.5 L302.5 150.5 H363.5 V169" fill="none" stroke="#7A8A99" stroke-width="1"/><text x="320" y="164" font-size="12" font-weight="bold" fill="#333333" textLength="33.32" lengthAdjust="spacing" font-family="Liberation Sans" >ADQL</text><circle cx="311.5" cy="159.5" r="4.3" fill="none" stroke="#333" stroke-width="1.1"/><circle cx="311.5" cy="159.5" r="2.4" fill="#333"/><path d="M363 169 V156 L369 150 H445 V169 Z" fill="#EEEEEE"/><path d="M363.5 169 V156.5 L369.5 150.5 H445.5 V169" fill="none" stroke="#7A8A99" stroke-width="1"/><text x="389" y="164" font-size="12" font-weight="bold" fill="#333333" textLength="45.1" lengthAdjust="spacing" font-family="Liberation Sans" >Schema</text><circle cx="379.5" cy="159.5" r="4.3" fill="none" stroke="#333" stroke-width="1.1"/><path d="M445 169 V156 L451 150 H511 V169 Z" fill="#EEEEEE"/><path d="M445.5 169 V156.5 L451.5 150.5 H511.5 V169" fill="none" stroke="#7A8A99" stroke-width="1"/><text x="471" y="164" font-size="12" font-weight="bold" fill="#333333" textLength="29.83" lengthAdjust="spacing" font-family="Liberation Sans" >Table</text><circle cx="461.5" cy="159.5" r="4.3" fill="none" stroke="#333" stroke-width="1.1"/><path d="M511 169 V156 L517 150 H596 V169 Z" fill="#EEEEEE"/><path d="M511.5 169 V156.5 L517.5 150.5 H596.5 V169" fill="none" stroke="#7A8A99" stroke-width="1"/><text x="535" y="164" font-size="12" font-weight="bold" fill="#333333" textLength="50.3" lengthAdjust="spacing" font-family="Liberation Sans" >Columns</text><circle cx="526.5" cy="159.5" r="4.3" fill="none" stroke="#333" stroke-width="1.1"/><path d="M596 169 V156 L602 150 H665 V169 Z" fill="#EEEEEE"/><path d="M596.5 169 V156.5 L602.5 150.5 H665.5 V169" fill="none" stroke="#7A8A99" stroke-width="1"/><text x="620" y="164" font-size="12" font-weight="bold" fill="#333333" textLength="35.3" lengthAdjust="spacing" font-family="Liberation Sans" >FKeys</text><circle cx="611" cy="159.5" r="4.3" fill="none" stroke="#333" stroke-width="1.1"/><path d="M665 169 V156 L671 150 H714 V169 Z" fill="#EEEEEE"/><path d="M665.5 169 V156.5 L671.5 150.5 H714.5 V169" fill="none" stroke="#7A8A99" stroke-width="1"/><text x="676" y="164" font-size="12" font-weight="bold" fill="#333333" textLength="29.4" lengthAdjust="spacing" font-family="Liberation Sans" >Hints</text><path d="M218 169 V156 L224 150 H296 V169 Z" fill="#C8DDF2"/><path d="M218.5 169 V156.5 L224.5 150.5 H296.5 V169" fill="none" stroke="#6382BF" stroke-width="1"/><path d="M219.5 169 V156.5 L224.5 151.5 H296" fill="none" stroke="#fff" stroke-width="1"/><text x="244" y="164" font-size="12" font-weight="bold" fill="#333333" textLength="41.83" lengthAdjust="spacing" font-family="Liberation Sans" >Service</text><circle cx="234.5" cy="159.5" r="4.3" fill="none" stroke="#333" stroke-width="1.1"/><rect x="219" y="169" width="77" height="4" fill="#C8DDF2" /><text x="224" y="192" font-size="12" font-weight="bold" fill="#333333" textLength="69.92" lengthAdjust="spacing" font-family="Liberation Sans" >Short Name:</text><text x="224" y="224" font-size="12" font-weight="bold" fill="#333333" textLength="27.87" lengthAdjust="spacing" font-family="Liberation Sans" >Title:</text><text x="224" y="256" font-size="12" font-weight="bold" fill="#333333" textLength="39.18" lengthAdjust="spacing" font-family="Liberation Sans" >IVO ID:</text><text x="224" y="288" font-size="12" font-weight="bold" fill="#333333" textLength="73.19" lengthAdjust="spacing" font-family="Liberation Sans" >Service URL:</text><text x="244" y="304" font-size="12" fill="#333333" textLength="175.0" lengthAdjust="spacing" font-family="Liberation Sans" >https://userquery.linea.org.br/tap</text><text x="224" y="320" font-size="12" font-weight="bold" fill="#333333" textLength="86.22" lengthAdjust="spacing" font-family="Liberation Sans" >Authentication:</text><text x="244" y="336" font-size="12" fill="#333333" textLength="73.5" lengthAdjust="spacing" font-family="Liberation Sans" >(anonymous)</text><text x="224" y="352" font-size="12" font-weight="bold" fill="#333333" textLength="88.23" lengthAdjust="spacing" font-family="Liberation Sans" >Reference URL:</text><text x="224" y="384" font-size="12" font-weight="bold" fill="#333333" textLength="86.26" lengthAdjust="spacing" font-family="Liberation Sans" >Examples URL:</text><text x="224" y="416" font-size="12" font-weight="bold" fill="#333333" textLength="27.44" lengthAdjust="spacing" font-family="Liberation Sans" >Size:</text><text x="244" y="432" font-size="12" fill="#333333" textLength="111.0" lengthAdjust="spacing" font-family="Liberation Sans" >3 schemas, 2 tables</text><text x="244" y="399" font-size="12" fill="#0000FF" textLength="231.0" lengthAdjust="spacing" font-family="Liberation Sans" >https://userquery.linea.org.br/tap/examples</text><rect x="453" y="388" width="1" height="14" fill="#111" /><path d="M486 391.8 H483 V399 H490.1 V396" stroke="#0000FF" stroke-width="2" fill="none" stroke-linejoin="miter"/><path d="M486.8 389.8 H492.2 V395.2 Z" fill="#0000FF"/><path d="M485.3 396.6 L490.6 391.3" stroke="#0000FF" stroke-width="2"/><clipPath id="vp"><rect x="219" y="174" width="593" height="274"/></clipPath><text x="224" y="447" font-size="12" font-weight="bold" fill="#333333" textLength="57.48" lengthAdjust="spacing" font-family="Liberation Sans" clip-path="url(#vp)">Publisher:</text><rect x="813" y="174" width="14" height="274" fill="#EEEEEE" /><rect x="812" y="174" width="1" height="275" fill="#7A8A99" /><rect x="813" y="189" width="1" height="243" fill="#B8CFE5" /><rect x="813" y="174" width="14" height="15" fill="#EEEEEE" /><rect x="813" y="174" width="14" height="1" fill="#FFFFFF" /><rect x="813" y="174" width="1" height="15" fill="#FFFFFF" /><path d="M816 183 L820.5 178.5 L825 183 Z" fill="#222"/><rect x="813" y="190" width="14" height="118" fill="url(#g16)" /><rect x="812" y="189" width="15" height="1" fill="#6382BF" /><rect x="812" y="308" width="15" height="1" fill="#6382BF" /><rect x="812" y="189" width="1" height="120" fill="#6382BF" /><rect x="816" y="247" width="8" height="1" fill="#6382BF" /><rect x="816" y="249" width="8" height="1" fill="#6382BF" /><rect x="816" y="251" width="8" height="1" fill="#6382BF" /><rect x="813" y="432" width="14" height="1" fill="#7A8A99" /><rect x="813" y="433" width="14" height="1" fill="#FFFFFF" /><rect x="813" y="432" width="1" height="16" fill="#FFFFFF" /><path d="M816 439 L820.5 443.5 L825 439 Z" fill="#222"/><rect x="16" y="476" width="5" height="1" fill="#000" /><rect x="135" y="476" width="700" height="1" fill="#000" /><rect x="16" y="476" width="1" height="39" fill="#000" /><rect x="834" y="476" width="1" height="39" fill="#000" /><rect x="16" y="514" width="819" height="1" fill="#000" /><text x="23" y="481" font-size="12" font-weight="bold" fill="#333333" textLength="111.08" lengthAdjust="spacing" font-family="Liberation Sans" >Service Capabilities</text><text x="19" y="504" font-size="12" font-weight="bold" fill="#333333" textLength="97.67" lengthAdjust="spacing" font-family="Liberation Sans" >Query Language:</text><rect x="119" y="488" width="96" height="23" fill="#EEEEEE" /><rect x="119" y="488" width="96" height="1" fill="#B8CFE5" /><rect x="119" y="510" width="96" height="1" fill="#B8CFE5" /><rect x="119" y="488" width="1" height="23" fill="#B8CFE5" /><rect x="214" y="488" width="1" height="23" fill="#B8CFE5" /><rect x="216" y="488" width="18" height="23" fill="url(#g17)" /><rect x="216" y="488" width="18" height="1" fill="#FFFFFF" /><rect x="118" y="487" width="117" height="1" fill="#7A8A99" /><rect x="118" y="511" width="117" height="1" fill="#7A8A99" /><rect x="118" y="487" width="1" height="25" fill="#7A8A99" /><rect x="234" y="487" width="1" height="25" fill="#7A8A99" /><rect x="215" y="487" width="1" height="25" fill="#7A8A99" /><path d="M220.0 497.0 H230.0 L225.0 502.0 Z" fill="#222"/><text x="121" y="504" font-size="12" font-weight="bold" fill="#333333" textLength="44.42" lengthAdjust="spacing" font-family="Liberation Sans" >adql-2.0</text><text x="245" y="504" font-size="12" font-weight="bold" fill="#333333" textLength="61.42" lengthAdjust="spacing" font-family="Liberation Sans" >Max Rows:</text><rect x="311" y="488" width="108" height="23" fill="#FFFFFF" /><rect x="420" y="488" width="18" height="23" fill="url(#g18)" /><rect x="420" y="488" width="18" height="1" fill="#FFFFFF" /><rect x="310" y="487" width="129" height="1" fill="#7A8A99" /><rect x="310" y="511" width="129" height="1" fill="#7A8A99" /><rect x="310" y="487" width="1" height="25" fill="#7A8A99" /><rect x="438" y="487" width="1" height="25" fill="#7A8A99" /><rect x="419" y="487" width="1" height="25" fill="#7A8A99" /><path d="M424.0 497.0 H434.0 L429.0 502.0 Z" fill="#222"/><text x="449" y="504" font-size="12" font-weight="bold" fill="#333333" textLength="50.3" lengthAdjust="spacing" font-family="Liberation Sans" >Uploads:</text><rect x="502" y="487" width="217" height="24" fill="#EEEEEE" /><rect x="501" y="486" width="219" height="1" fill="#B8CFE5" /><rect x="501" y="511" width="219" height="1" fill="#B8CFE5" /><rect x="501" y="486" width="1" height="26" fill="#B8CFE5" /><rect x="719" y="486" width="1" height="26" fill="#B8CFE5" /><text x="503" y="504" font-size="12" fill="#333333" textLength="64.0" lengthAdjust="spacing" font-family="Liberation Sans" >unavailable</text><rect x="730" y="486" width="101" height="1" fill="#A0A0A0" /><rect x="730" y="511" width="101" height="1" fill="#A0A0A0" /><rect x="730" y="486" width="1" height="26" fill="#A0A0A0" /><rect x="830" y="486" width="1" height="26" fill="#A0A0A0" /><text x="738" y="504" font-size="12" font-weight="bold" fill="#939FAB" textLength="58.15" lengthAdjust="spacing" font-family="Liberation Sans" >Log In/Out</text><path d="M808.5 489 H814 L815.5 491 V494.5 L813.5 496.5 H809 L807 494.5 V491 Z" fill="#c6c6c6"/><path d="M805.2 508.5 V502 L808 498 H815 L817.8 500.5 V508.5 Z" fill="#c6c6c6"/><path d="M801.5 507 L818.5 490" stroke="#bababa" stroke-width="3.4"/><rect x="16" y="525" width="4" height="1" fill="#000" /><rect x="84" y="525" width="751" height="1" fill="#000" /><rect x="16" y="525" width="1" height="223" fill="#000" /><rect x="834" y="525" width="1" height="223" fill="#000" /><rect x="16" y="747" width="819" height="1" fill="#000" /><text x="22" y="530" font-size="12" font-weight="bold" fill="#333333" textLength="59.67" lengthAdjust="spacing" font-family="Liberation Sans" >ADQL Text</text><text x="21" y="559" font-size="12" font-weight="bold" fill="#333333" textLength="71.86" lengthAdjust="spacing" font-family="Liberation Sans" >Query Mode:</text><rect x="96" y="543" width="89" height="23" fill="#EEEEEE" /><rect x="96" y="543" width="89" height="1" fill="#B8CFE5" /><rect x="96" y="565" width="89" height="1" fill="#B8CFE5" /><rect x="96" y="543" width="1" height="23" fill="#B8CFE5" /><rect x="184" y="543" width="1" height="23" fill="#B8CFE5" /><rect x="186" y="543" width="18" height="23" fill="url(#g19)" /><rect x="186" y="543" width="18" height="1" fill="#FFFFFF" /><rect x="95" y="542" width="110" height="1" fill="#7A8A99" /><rect x="95" y="566" width="110" height="1" fill="#7A8A99" /><rect x="95" y="542" width="1" height="25" fill="#7A8A99" /><rect x="204" y="542" width="1" height="25" fill="#7A8A99" /><rect x="185" y="542" width="1" height="25" fill="#7A8A99" /><path d="M190.0 552.0 H200.0 L195.0 557.0 Z" fill="#222"/><text x="98" y="559" font-size="12" font-weight="bold" fill="#333333" textLength="75.12" lengthAdjust="spacing" font-family="Liberation Sans" >Synchronous</text><rect x="432" y="535" width="400" height="40" fill="url(#g20)" /><rect x="435" y="537" width="34" height="33" fill="#EEEEEE" /><rect x="434" y="536" width="35" height="1" fill="#8E8E8E" /><rect x="434" y="569" width="35" height="1" fill="#8E8E8E" /><rect x="434" y="536" width="1" height="34" fill="#8E8E8E" /><rect x="468" y="536" width="1" height="34" fill="#8E8E8E" /><rect x="435" y="570" width="35" height="1" fill="#FFFFFF" /><rect x="469" y="537" width="1" height="34" fill="#FFFFFF" /><rect x="435" y="537" width="33" height="1" fill="#FFFFFF" /><rect x="435" y="537" width="1" height="32" fill="#FFFFFF" /><rect x="471" y="537" width="34" height="33" fill="#EEEEEE" /><rect x="470" y="536" width="35" height="1" fill="#8E8E8E" /><rect x="470" y="569" width="35" height="1" fill="#8E8E8E" /><rect x="470" y="536" width="1" height="34" fill="#8E8E8E" /><rect x="504" y="536" width="1" height="34" fill="#8E8E8E" /><rect x="471" y="570" width="35" height="1" fill="#FFFFFF" /><rect x="505" y="537" width="1" height="34" fill="#FFFFFF" /><rect x="471" y="537" width="33" height="1" fill="#FFFFFF" /><rect x="471" y="537" width="1" height="32" fill="#FFFFFF" /><rect x="507" y="537" width="34" height="33" fill="#EEEEEE" /><rect x="506" y="536" width="35" height="1" fill="#CFCFCF" /><rect x="506" y="569" width="35" height="1" fill="#CFCFCF" /><rect x="506" y="536" width="1" height="34" fill="#CFCFCF" /><rect x="540" y="536" width="1" height="34" fill="#CFCFCF" /><rect x="507" y="570" width="35" height="1" fill="#FFFFFF" /><rect x="541" y="537" width="1" height="34" fill="#FFFFFF" /><rect x="507" y="537" width="33" height="1" fill="#FFFFFF" /><rect x="507" y="537" width="1" height="32" fill="#FFFFFF" /><rect x="543" y="537" width="34" height="33" fill="#EEEEEE" /><rect x="542" y="536" width="35" height="1" fill="#8E8E8E" /><rect x="542" y="569" width="35" height="1" fill="#8E8E8E" /><rect x="542" y="536" width="1" height="34" fill="#8E8E8E" /><rect x="576" y="536" width="1" height="34" fill="#8E8E8E" /><rect x="543" y="570" width="35" height="1" fill="#FFFFFF" /><rect x="577" y="537" width="1" height="34" fill="#FFFFFF" /><rect x="543" y="537" width="33" height="1" fill="#FFFFFF" /><rect x="543" y="537" width="1" height="32" fill="#FFFFFF" /><rect x="579" y="537" width="34" height="33" fill="#EEEEEE" /><rect x="578" y="536" width="35" height="1" fill="#CFCFCF" /><rect x="578" y="569" width="35" height="1" fill="#CFCFCF" /><rect x="578" y="536" width="1" height="34" fill="#CFCFCF" /><rect x="612" y="536" width="1" height="34" fill="#CFCFCF" /><rect x="579" y="570" width="35" height="1" fill="#FFFFFF" /><rect x="613" y="537" width="1" height="34" fill="#FFFFFF" /><rect x="579" y="537" width="33" height="1" fill="#FFFFFF" /><rect x="579" y="537" width="1" height="32" fill="#FFFFFF" /><rect x="615" y="537" width="34" height="33" fill="#EEEEEE" /><rect x="614" y="536" width="35" height="1" fill="#CFCFCF" /><rect x="614" y="569" width="35" height="1" fill="#CFCFCF" /><rect x="614" y="536" width="1" height="34" fill="#CFCFCF" /><rect x="648" y="536" width="1" height="34" fill="#CFCFCF" /><rect x="615" y="570" width="35" height="1" fill="#FFFFFF" /><rect x="649" y="537" width="1" height="34" fill="#FFFFFF" /><rect x="615" y="537" width="33" height="1" fill="#FFFFFF" /><rect x="615" y="537" width="1" height="32" fill="#FFFFFF" /><rect x="651" y="537" width="34" height="33" fill="#EEEEEE" /><rect x="650" y="536" width="35" height="1" fill="#CFCFCF" /><rect x="650" y="569" width="35" height="1" fill="#CFCFCF" /><rect x="650" y="536" width="1" height="34" fill="#CFCFCF" /><rect x="684" y="536" width="1" height="34" fill="#CFCFCF" /><rect x="651" y="570" width="35" height="1" fill="#FFFFFF" /><rect x="685" y="537" width="1" height="34" fill="#FFFFFF" /><rect x="651" y="537" width="33" height="1" fill="#FFFFFF" /><rect x="651" y="537" width="1" height="32" fill="#FFFFFF" /><rect x="687" y="537" width="34" height="33" fill="#EEEEEE" /><rect x="686" y="536" width="35" height="1" fill="#CFCFCF" /><rect x="686" y="569" width="35" height="1" fill="#CFCFCF" /><rect x="686" y="536" width="1" height="34" fill="#CFCFCF" /><rect x="720" y="536" width="1" height="34" fill="#CFCFCF" /><rect x="687" y="570" width="35" height="1" fill="#FFFFFF" /><rect x="721" y="537" width="1" height="34" fill="#FFFFFF" /><rect x="687" y="537" width="33" height="1" fill="#FFFFFF" /><rect x="687" y="537" width="1" height="32" fill="#FFFFFF" /><rect x="723" y="537" width="34" height="33" fill="#EEEEEE" /><rect x="722" y="536" width="35" height="1" fill="#CFCFCF" /><rect x="722" y="569" width="35" height="1" fill="#CFCFCF" /><rect x="722" y="536" width="1" height="34" fill="#CFCFCF" /><rect x="756" y="536" width="1" height="34" fill="#CFCFCF" /><rect x="723" y="570" width="35" height="1" fill="#FFFFFF" /><rect x="757" y="537" width="1" height="34" fill="#FFFFFF" /><rect x="723" y="537" width="33" height="1" fill="#FFFFFF" /><rect x="723" y="537" width="1" height="32" fill="#FFFFFF" /><rect x="759" y="537" width="34" height="33" fill="#EEEEEE" /><rect x="758" y="536" width="35" height="1" fill="#CFCFCF" /><rect x="758" y="569" width="35" height="1" fill="#CFCFCF" /><rect x="758" y="536" width="1" height="34" fill="#CFCFCF" /><rect x="792" y="536" width="1" height="34" fill="#CFCFCF" /><rect x="759" y="570" width="35" height="1" fill="#FFFFFF" /><rect x="793" y="537" width="1" height="34" fill="#FFFFFF" /><rect x="759" y="537" width="33" height="1" fill="#FFFFFF" /><rect x="759" y="537" width="1" height="32" fill="#FFFFFF" /><rect x="795" y="537" width="34" height="33" fill="#EEEEEE" /><rect x="794" y="536" width="35" height="1" fill="#CFCFCF" /><rect x="794" y="569" width="35" height="1" fill="#CFCFCF" /><rect x="794" y="536" width="1" height="34" fill="#CFCFCF" /><rect x="828" y="536" width="1" height="34" fill="#CFCFCF" /><rect x="795" y="570" width="35" height="1" fill="#FFFFFF" /><rect x="829" y="537" width="1" height="34" fill="#FFFFFF" /><rect x="795" y="537" width="33" height="1" fill="#FFFFFF" /><rect x="795" y="537" width="1" height="32" fill="#FFFFFF" /><path d="M440.5 546.5 H447.5 L448.0 544.0 Q448.5 542.5 450.0 542.5 H456.0 Q457.5 542.5 457.5 544.0 V558.5 H440.5 Z" fill="#fbfaf5" stroke="#4f6f90" stroke-width="1.1"/><path d="M454.5 552.5 H458.5 V556.5 H462.5 V560.5 H458.5 V564.5 H454.5 V560.5 H450.5 V556.5 H454.5 Z" fill="#14a014" stroke="#000" stroke-width="1.8" stroke-linejoin="miter"/><path d="M455.5 553.5 V557.5 H451.5" stroke="#5fd85f" stroke-width="0.9" fill="none"/><path d="M476.5 546.5 H483.5 L484.0 544.0 Q484.5 542.5 486.0 542.5 H492.0 Q493.5 542.5 493.5 544.0 V558.5 H476.5 Z" fill="#fbfaf5" stroke="#4f6f90" stroke-width="1.1"/><path d="M480.5 549.5 H487.5 L488.0 547.0 Q488.5 545.5 490.0 545.5 H496.0 Q497.5 545.5 497.5 547.0 V561.5 H480.5 Z" fill="#fbfaf5" stroke="#4f6f90" stroke-width="1.1"/><path d="M490.5 552.5 H494.5 V556.5 H498.5 V560.5 H494.5 V564.5 H490.5 V560.5 H486.5 V556.5 H490.5 Z" fill="#14a014" stroke="#000" stroke-width="1.8" stroke-linejoin="miter"/><path d="M491.5 553.5 V557.5 H487.5" stroke="#5fd85f" stroke-width="0.9" fill="none"/><path d="M512 546.5 H519 L519.5 544.0 Q520 542.5 521.5 542.5 H528.5 Q530 542.5 530 544.0 V559 H512 Z" fill="#d2d2d2"/><rect x="521" y="555" width="15" height="7" fill="#c2c2c2"/><rect x="523" y="557" width="11" height="2" fill="#d6d6d6"/><path d="M548.8 549.8 H555 L555.5 547.3 Q556 545.8 557.5 545.8 H568.7 Q570.2 545.8 570.2 547.3 V560.8 H548.8 Z" fill="#fbfaf5" stroke="#4f6f90" stroke-width="1.6"/><text x="557.5" y="551.5" font-size="6.5" font-weight="bold" fill="#000" textLength="11" lengthAdjust="spacingAndGlyphs" font-family="Liberation Mono" >Abc</text><path d="M600.2 544.2 L606.9 551 L593.8 563.6 L585 558.8 Z" fill="#d0d0d0" stroke="#c6c6c6" stroke-width="0.8"/><path d="M596.5 548 L603.2 554.8 L606.9 551 L600.2 544.2 Z" fill="#c8c8c8"/><path d="M621.5 551.8 L628.7 544.5 V548.5 H636.5 Q642 548.5 642 555 V563 H634.5 V557.5 Q634.5 555.3 632.5 555.3 H628.7 V559.2 Z" fill="#cecece" stroke="#b6b6b6" stroke-width="1.5" stroke-linejoin="round"/><path d="M678.5 551.8 L671.3 544.5 V548.5 H663.5 Q658 548.5 658 555 V563 H665.5 V557.5 Q665.5 555.3 667.5 555.3 H671.3 V559.2 Z" fill="#cecece" stroke="#b6b6b6" stroke-width="1.5" stroke-linejoin="round"/><rect x="693.5" y="546" width="21" height="15.5" rx="2" fill="#d0d0d0" stroke="#bfbfbf"/><text x="698.0" y="555.5" font-size="7" font-weight="bold" fill="#ededed" textLength="10" lengthAdjust="spacingAndGlyphs" font-family="Liberation Mono" >TBL</text><path d="M696.0 559 L698.5 556.5 L701.0 559 Z" fill="#eeeeee"/><rect x="729.5" y="546" width="21" height="15.5" rx="2" fill="#d0d0d0" stroke="#bfbfbf"/><text x="734.0" y="555.5" font-size="7" font-weight="bold" fill="#ededed" textLength="15" lengthAdjust="spacingAndGlyphs" font-family="Liberation Mono" >COLS</text><path d="M732.0 559 L734.5 556.5 L737.0 559 Z" fill="#eeeeee"/><path d="M776.1 542.8 L787.4 564.4 H764.6 Z" fill="#c4c4c4" stroke="#c4c4c4" stroke-linejoin="round" stroke-width="1"/><rect x="775" y="549" width="2" height="8" fill="#eee"/><rect x="775" y="560" width="2" height="2" fill="#eee"/><g transform="translate(812.3,554.6) rotate(45)"><rect x="-15.5" y="-6" width="31" height="12" rx="6" fill="#cdcdcd" stroke="#bdbdbd"/><rect x="-4.5" y="-4" width="9" height="8" fill="#c2c2c2" stroke="#dadada" stroke-width="0.8"/><g fill="#e2e2e2"><circle cx="-10" cy="-2" r="0.6"/><circle cx="-8" cy="0" r="0.6"/><circle cx="-10" cy="2" r="0.6"/><circle cx="-12" cy="0" r="0.6"/><circle cx="10" cy="-2" r="0.6"/><circle cx="8" cy="0" r="0.6"/><circle cx="10" cy="2" r="0.6"/><circle cx="12" cy="0" r="0.6"/></g></g><rect x="20" y="599" width="811" height="113" fill="#C8DDF2" /><rect x="19" y="598" width="1" height="115" fill="#6382BF" /><rect x="831" y="598" width="1" height="115" fill="#7A8A99" /><rect x="19" y="712" width="813" height="1" fill="#7A8A99" /><rect x="19" y="598" width="813" height="1" fill="#6382BF" /><rect x="20" y="599" width="811" height="1" fill="#FFFFFF" /><path d="M21 598 V585 L27 579 H48 V598 Z" fill="#C8DDF2"/><path d="M21.5 598 V585.5 L27.5 579.5 H48.5 V598" fill="none" stroke="#6382BF" stroke-width="1"/><path d="M22.5 598 V585.5 L27.5 580.5 H48" fill="none" stroke="#fff" stroke-width="1"/><text x="32" y="593" font-size="12" font-weight="bold" fill="#333333" font-family="Liberation Sans" >1</text><rect x="22" y="598" width="26" height="2" fill="#C8DDF2" /><rect x="22" y="603" width="805" height="105" fill="#FFFFFF" /><rect x="21" y="602" width="807" height="1" fill="#7A8A99" /><rect x="21" y="602" width="1" height="107" fill="#7A8A99" /><rect x="21" y="708" width="808" height="1" fill="#7A8A99" /><rect x="827" y="602" width="1" height="107" fill="#7A8A99" /><rect x="22" y="709" width="807" height="1" fill="#FFFFFF" /><rect x="828" y="603" width="1" height="107" fill="#FFFFFF" /><rect x="20" y="718" width="89" height="25" fill="url(#g21)" /><rect x="19" y="717" width="90" height="1" fill="#7A8A99" /><rect x="19" y="742" width="90" height="1" fill="#7A8A99" /><rect x="19" y="717" width="1" height="26" fill="#7A8A99" /><rect x="108" y="717" width="1" height="26" fill="#7A8A99" /><rect x="20" y="743" width="90" height="1" fill="#FFFFFF" /><rect x="109" y="718" width="1" height="26" fill="#FFFFFF" /><rect x="20" y="718" width="88" height="1" fill="#FFFFFF" /><rect x="20" y="718" width="1" height="24" fill="#FFFFFF" /><text x="36" y="735" font-size="12" font-weight="bold" fill="#333333" textLength="56.02" lengthAdjust="spacing" font-family="Liberation Sans" >Examples</text><rect x="114" y="717" width="15" height="1" fill="#A8A8A8" /><rect x="114" y="742" width="15" height="1" fill="#A8A8A8" /><rect x="114" y="717" width="1" height="26" fill="#A8A8A8" /><rect x="128" y="717" width="1" height="26" fill="#A8A8A8" /><rect x="115" y="743" width="15" height="1" fill="#FFFFFF" /><rect x="129" y="718" width="1" height="26" fill="#FFFFFF" /><rect x="131" y="717" width="15" height="1" fill="#A8A8A8" /><rect x="131" y="742" width="15" height="1" fill="#A8A8A8" /><rect x="131" y="717" width="1" height="26" fill="#A8A8A8" /><rect x="145" y="717" width="1" height="26" fill="#A8A8A8" /><rect x="132" y="743" width="15" height="1" fill="#FFFFFF" /><rect x="146" y="718" width="1" height="26" fill="#FFFFFF" /><path d="M124 725 L119 730 L124 735 Z" fill="#B0B0B0"/><path d="M136 725 L141 730 L136 735 Z" fill="#B0B0B0"/><rect x="152" y="718" width="605" height="1" fill="#FFFFFF" /><rect x="152" y="742" width="605" height="1" fill="#FFFFFF" /><rect x="152" y="718" width="1" height="25" fill="#FFFFFF" /><rect x="756" y="718" width="1" height="25" fill="#FFFFFF" /><rect x="151" y="717" width="605" height="1" fill="#A8A8A8" /><rect x="151" y="741" width="605" height="1" fill="#A8A8A8" /><rect x="151" y="717" width="1" height="25" fill="#A8A8A8" /><rect x="755" y="717" width="1" height="25" fill="#A8A8A8" /><rect x="762" y="717" width="69" height="1" fill="#A0A0A0" /><rect x="762" y="742" width="69" height="1" fill="#A0A0A0" /><rect x="762" y="717" width="1" height="26" fill="#A0A0A0" /><rect x="830" y="717" width="1" height="26" fill="#A0A0A0" /><rect x="763" y="743" width="69" height="1" fill="#FFFFFF" /><rect x="831" y="718" width="1" height="26" fill="#FFFFFF" /><text x="779" y="735" font-size="12" font-weight="bold" fill="#939FAB" textLength="21.54" lengthAdjust="spacing" font-family="Liberation Sans" >Info</text><path d="M807.5 727 H805 V734 H812 V731" stroke="#ABABAB" stroke-width="2" fill="none" stroke-linejoin="miter"/><path d="M809 725 H814 V730 H812.5 L809 726.5 Z" fill="#ABABAB"/><path d="M807.5 732 L811.5 728" stroke="#ABABAB" stroke-width="2"/><rect x="384" y="759" width="93" height="1" fill="#A0A0A0" /><rect x="384" y="784" width="93" height="1" fill="#A0A0A0" /><rect x="384" y="759" width="1" height="26" fill="#A0A0A0" /><rect x="476" y="759" width="1" height="26" fill="#A0A0A0" /><rect x="385" y="785" width="93" height="1" fill="#FFFFFF" /><rect x="477" y="760" width="1" height="26" fill="#FFFFFF" /><text x="401" y="777" font-size="12" font-weight="bold" fill="#939FAB" textLength="59.49" lengthAdjust="spacing" font-family="Liberation Sans" >Run Query</text></svg></body></html>
